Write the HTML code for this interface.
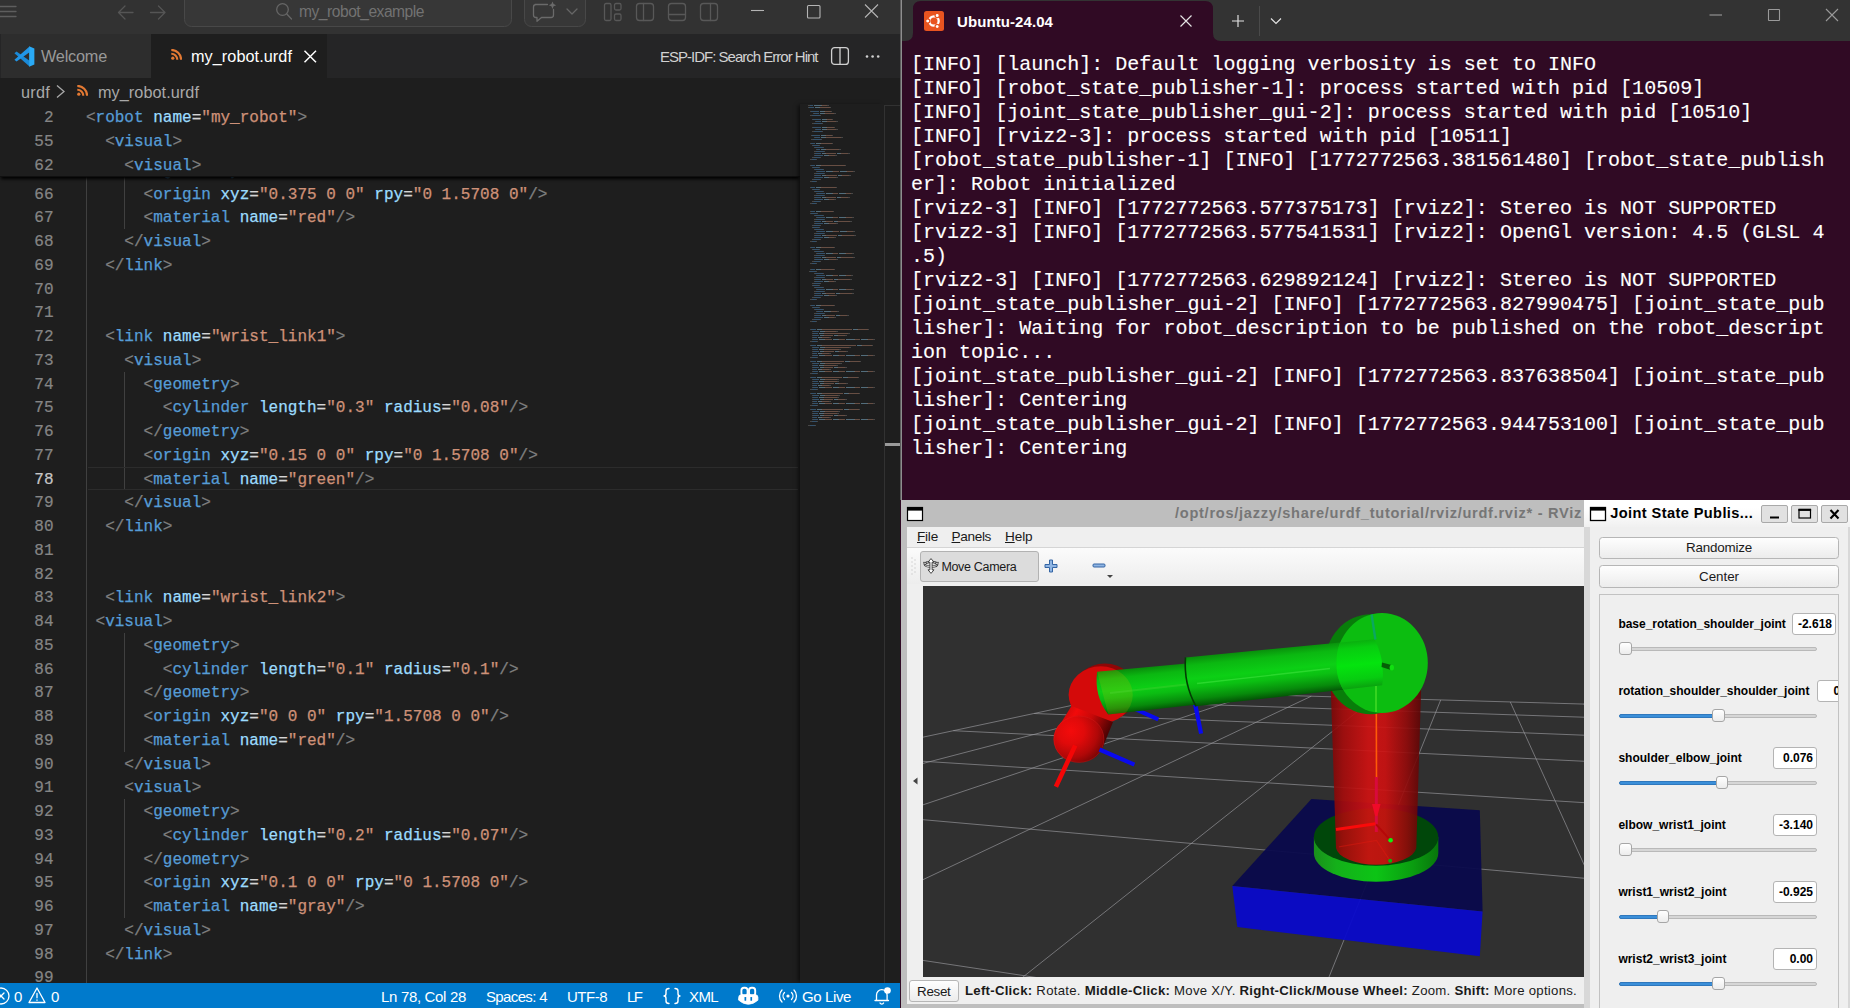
<!DOCTYPE html><html><head><meta charset="utf-8"><title>screen</title><style>html,body{margin:0;padding:0;background:#300a24;}
body{width:1850px;height:1008px;overflow:hidden;position:relative;font-family:'Liberation Sans', sans-serif;}
div,svg{position:absolute;}
.t{position:absolute;white-space:pre;}

.ln{position:absolute;left:0;width:53.5px;text-align:right;font:16.03px/23.75px 'Liberation Mono', monospace;white-space:pre;height:23.75px;-webkit-text-stroke:0.2px}
.cl{position:absolute;left:85.9px;font:16.03px/23.75px 'Liberation Mono', monospace;white-space:pre;height:23.75px;color:#d4d4d4;-webkit-text-stroke:0.25px}

.tl{position:absolute;left:9.2px;-webkit-text-stroke:0.12px;font:20.2px/24px 'Liberation Mono', monospace;color:#ffffff;white-space:pre;height:24px;transform-origin:0 50%;transform:scaleX(0.99208);}
</style></head><body><div id="vsc" style="position:absolute;left:0;top:0;width:900px;height:1008px;overflow:hidden;background:#1e1e1e;">
<div style="position:absolute;left:0;top:104px;width:800px;height:879px;overflow:hidden;">
<div style="position:absolute;left:86px;top:70px;width:1px;height:820px;background:#404040"></div>
<div style="position:absolute;left:124px;top:53.85px;width:1px;height:71.25px;background:#404040"></div>
<div style="position:absolute;left:124px;top:267.60px;width:1px;height:118.75px;background:#404040"></div>
<div style="position:absolute;left:124px;top:528.85px;width:1px;height:118.75px;background:#404040"></div>
<div style="position:absolute;left:124px;top:695.10px;width:1px;height:118.75px;background:#404040"></div>
<div style="position:absolute;left:88px;top:362.90px;width:710px;height:21.15px;border-top:1.5px solid #2c2c2c;border-bottom:1.5px solid #2c2c2c;"></div>
<div class="ln" style="top:55.95px;color:#858585">65</div>
<div class="cl" style="top:55.95px">      <span style="color:#808080">&lt;/</span><span style="color:#569cd6">geometry</span><span style="color:#808080">&gt;</span></div>
<div class="ln" style="top:79.70px;color:#858585">66</div>
<div class="cl" style="top:79.70px">      <span style="color:#808080">&lt;</span><span style="color:#569cd6">origin</span> <span style="color:#9cdcfe">xyz</span><span style="color:#d4d4d4">=</span><span style="color:#ce9178">&quot;0.375 0 0&quot;</span> <span style="color:#9cdcfe">rpy</span><span style="color:#d4d4d4">=</span><span style="color:#ce9178">&quot;0 1.5708 0&quot;</span><span style="color:#808080">/&gt;</span></div>
<div class="ln" style="top:103.45px;color:#858585">67</div>
<div class="cl" style="top:103.45px">      <span style="color:#808080">&lt;</span><span style="color:#569cd6">material</span> <span style="color:#9cdcfe">name</span><span style="color:#d4d4d4">=</span><span style="color:#ce9178">&quot;red&quot;</span><span style="color:#808080">/&gt;</span></div>
<div class="ln" style="top:127.20px;color:#858585">68</div>
<div class="cl" style="top:127.20px">    <span style="color:#808080">&lt;/</span><span style="color:#569cd6">visual</span><span style="color:#808080">&gt;</span></div>
<div class="ln" style="top:150.95px;color:#858585">69</div>
<div class="cl" style="top:150.95px">  <span style="color:#808080">&lt;/</span><span style="color:#569cd6">link</span><span style="color:#808080">&gt;</span></div>
<div class="ln" style="top:174.70px;color:#858585">70</div>
<div class="cl" style="top:174.70px"></div>
<div class="ln" style="top:198.45px;color:#858585">71</div>
<div class="cl" style="top:198.45px"></div>
<div class="ln" style="top:222.20px;color:#858585">72</div>
<div class="cl" style="top:222.20px">  <span style="color:#808080">&lt;</span><span style="color:#569cd6">link</span> <span style="color:#9cdcfe">name</span><span style="color:#d4d4d4">=</span><span style="color:#ce9178">&quot;wrist_link1&quot;</span><span style="color:#808080">&gt;</span></div>
<div class="ln" style="top:245.95px;color:#858585">73</div>
<div class="cl" style="top:245.95px">    <span style="color:#808080">&lt;</span><span style="color:#569cd6">visual</span><span style="color:#808080">&gt;</span></div>
<div class="ln" style="top:269.70px;color:#858585">74</div>
<div class="cl" style="top:269.70px">      <span style="color:#808080">&lt;</span><span style="color:#569cd6">geometry</span><span style="color:#808080">&gt;</span></div>
<div class="ln" style="top:293.45px;color:#858585">75</div>
<div class="cl" style="top:293.45px">        <span style="color:#808080">&lt;</span><span style="color:#569cd6">cylinder</span> <span style="color:#9cdcfe">length</span><span style="color:#d4d4d4">=</span><span style="color:#ce9178">&quot;0.3&quot;</span> <span style="color:#9cdcfe">radius</span><span style="color:#d4d4d4">=</span><span style="color:#ce9178">&quot;0.08&quot;</span><span style="color:#808080">/&gt;</span></div>
<div class="ln" style="top:317.20px;color:#858585">76</div>
<div class="cl" style="top:317.20px">      <span style="color:#808080">&lt;/</span><span style="color:#569cd6">geometry</span><span style="color:#808080">&gt;</span></div>
<div class="ln" style="top:340.95px;color:#858585">77</div>
<div class="cl" style="top:340.95px">      <span style="color:#808080">&lt;</span><span style="color:#569cd6">origin</span> <span style="color:#9cdcfe">xyz</span><span style="color:#d4d4d4">=</span><span style="color:#ce9178">&quot;0.15 0 0&quot;</span> <span style="color:#9cdcfe">rpy</span><span style="color:#d4d4d4">=</span><span style="color:#ce9178">&quot;0 1.5708 0&quot;</span><span style="color:#808080">/&gt;</span></div>
<div class="ln" style="top:364.70px;color:#c6c6c6">78</div>
<div class="cl" style="top:364.70px">      <span style="color:#808080">&lt;</span><span style="color:#569cd6">material</span> <span style="color:#9cdcfe">name</span><span style="color:#d4d4d4">=</span><span style="color:#ce9178">&quot;green&quot;</span><span style="color:#808080">/&gt;</span></div>
<div class="ln" style="top:388.45px;color:#858585">79</div>
<div class="cl" style="top:388.45px">    <span style="color:#808080">&lt;/</span><span style="color:#569cd6">visual</span><span style="color:#808080">&gt;</span></div>
<div class="ln" style="top:412.20px;color:#858585">80</div>
<div class="cl" style="top:412.20px">  <span style="color:#808080">&lt;/</span><span style="color:#569cd6">link</span><span style="color:#808080">&gt;</span></div>
<div class="ln" style="top:435.95px;color:#858585">81</div>
<div class="cl" style="top:435.95px"></div>
<div class="ln" style="top:459.70px;color:#858585">82</div>
<div class="cl" style="top:459.70px"></div>
<div class="ln" style="top:483.45px;color:#858585">83</div>
<div class="cl" style="top:483.45px">  <span style="color:#808080">&lt;</span><span style="color:#569cd6">link</span> <span style="color:#9cdcfe">name</span><span style="color:#d4d4d4">=</span><span style="color:#ce9178">&quot;wrist_link2&quot;</span><span style="color:#808080">&gt;</span></div>
<div class="ln" style="top:507.20px;color:#858585">84</div>
<div class="cl" style="top:507.20px"> <span style="color:#808080">&lt;</span><span style="color:#569cd6">visual</span><span style="color:#808080">&gt;</span></div>
<div class="ln" style="top:530.95px;color:#858585">85</div>
<div class="cl" style="top:530.95px">      <span style="color:#808080">&lt;</span><span style="color:#569cd6">geometry</span><span style="color:#808080">&gt;</span></div>
<div class="ln" style="top:554.70px;color:#858585">86</div>
<div class="cl" style="top:554.70px">        <span style="color:#808080">&lt;</span><span style="color:#569cd6">cylinder</span> <span style="color:#9cdcfe">length</span><span style="color:#d4d4d4">=</span><span style="color:#ce9178">&quot;0.1&quot;</span> <span style="color:#9cdcfe">radius</span><span style="color:#d4d4d4">=</span><span style="color:#ce9178">&quot;0.1&quot;</span><span style="color:#808080">/&gt;</span></div>
<div class="ln" style="top:578.45px;color:#858585">87</div>
<div class="cl" style="top:578.45px">      <span style="color:#808080">&lt;/</span><span style="color:#569cd6">geometry</span><span style="color:#808080">&gt;</span></div>
<div class="ln" style="top:602.20px;color:#858585">88</div>
<div class="cl" style="top:602.20px">      <span style="color:#808080">&lt;</span><span style="color:#569cd6">origin</span> <span style="color:#9cdcfe">xyz</span><span style="color:#d4d4d4">=</span><span style="color:#ce9178">&quot;0 0 0&quot;</span> <span style="color:#9cdcfe">rpy</span><span style="color:#d4d4d4">=</span><span style="color:#ce9178">&quot;1.5708 0 0&quot;</span><span style="color:#808080">/&gt;</span></div>
<div class="ln" style="top:625.95px;color:#858585">89</div>
<div class="cl" style="top:625.95px">      <span style="color:#808080">&lt;</span><span style="color:#569cd6">material</span> <span style="color:#9cdcfe">name</span><span style="color:#d4d4d4">=</span><span style="color:#ce9178">&quot;red&quot;</span><span style="color:#808080">/&gt;</span></div>
<div class="ln" style="top:649.70px;color:#858585">90</div>
<div class="cl" style="top:649.70px">    <span style="color:#808080">&lt;/</span><span style="color:#569cd6">visual</span><span style="color:#808080">&gt;</span></div>
<div class="ln" style="top:673.45px;color:#858585">91</div>
<div class="cl" style="top:673.45px">    <span style="color:#808080">&lt;</span><span style="color:#569cd6">visual</span><span style="color:#808080">&gt;</span></div>
<div class="ln" style="top:697.20px;color:#858585">92</div>
<div class="cl" style="top:697.20px">      <span style="color:#808080">&lt;</span><span style="color:#569cd6">geometry</span><span style="color:#808080">&gt;</span></div>
<div class="ln" style="top:720.95px;color:#858585">93</div>
<div class="cl" style="top:720.95px">        <span style="color:#808080">&lt;</span><span style="color:#569cd6">cylinder</span> <span style="color:#9cdcfe">length</span><span style="color:#d4d4d4">=</span><span style="color:#ce9178">&quot;0.2&quot;</span> <span style="color:#9cdcfe">radius</span><span style="color:#d4d4d4">=</span><span style="color:#ce9178">&quot;0.07&quot;</span><span style="color:#808080">/&gt;</span></div>
<div class="ln" style="top:744.70px;color:#858585">94</div>
<div class="cl" style="top:744.70px">      <span style="color:#808080">&lt;/</span><span style="color:#569cd6">geometry</span><span style="color:#808080">&gt;</span></div>
<div class="ln" style="top:768.45px;color:#858585">95</div>
<div class="cl" style="top:768.45px">      <span style="color:#808080">&lt;</span><span style="color:#569cd6">origin</span> <span style="color:#9cdcfe">xyz</span><span style="color:#d4d4d4">=</span><span style="color:#ce9178">&quot;0.1 0 0&quot;</span> <span style="color:#9cdcfe">rpy</span><span style="color:#d4d4d4">=</span><span style="color:#ce9178">&quot;0 1.5708 0&quot;</span><span style="color:#808080">/&gt;</span></div>
<div class="ln" style="top:792.20px;color:#858585">96</div>
<div class="cl" style="top:792.20px">      <span style="color:#808080">&lt;</span><span style="color:#569cd6">material</span> <span style="color:#9cdcfe">name</span><span style="color:#d4d4d4">=</span><span style="color:#ce9178">&quot;gray&quot;</span><span style="color:#808080">/&gt;</span></div>
<div class="ln" style="top:815.95px;color:#858585">97</div>
<div class="cl" style="top:815.95px">    <span style="color:#808080">&lt;/</span><span style="color:#569cd6">visual</span><span style="color:#808080">&gt;</span></div>
<div class="ln" style="top:839.70px;color:#858585">98</div>
<div class="cl" style="top:839.70px">  <span style="color:#808080">&lt;/</span><span style="color:#569cd6">link</span><span style="color:#808080">&gt;</span></div>
<div class="ln" style="top:863.45px;color:#858585">99</div>
<div class="cl" style="top:863.45px"></div>
<div style="position:absolute;left:0;top:0;width:800px;height:71.6px;background:#1e1e1e;box-shadow:0 3px 3px -1px #000;border-bottom:1px solid #101010"></div>
<div class="ln" style="top:3.40px;color:#858585">2</div>
<div class="cl" style="top:3.40px"><span style="color:#808080">&lt;</span><span style="color:#569cd6">robot</span> <span style="color:#9cdcfe">name</span><span style="color:#d4d4d4">=</span><span style="color:#ce9178">&quot;my_robot&quot;</span><span style="color:#808080">&gt;</span></div>
<div class="ln" style="top:27.15px;color:#858585">55</div>
<div class="cl" style="top:27.15px">  <span style="color:#808080">&lt;</span><span style="color:#569cd6">visual</span><span style="color:#808080">&gt;</span></div>
<div class="ln" style="top:50.90px;color:#858585">62</div>
<div class="cl" style="top:50.90px">    <span style="color:#808080">&lt;</span><span style="color:#569cd6">visual</span><span style="color:#808080">&gt;</span></div>
</div>
<div style="position:absolute;left:800px;top:104px;width:84px;height:879px;background:#1e1e1e;box-shadow:-3px 0 4px -1px rgba(0,0,0,.55)"></div>
<svg style="position:absolute;left:800px;top:104px" width="84" height="879" viewBox="0 0 84 879" shape-rendering="crispEdges"><rect x="8.0" y="1.0" width="2.0" height="1" fill="#808080" opacity="0.42"/><rect x="10.0" y="1.0" width="3.0" height="1" fill="#569cd6" opacity="0.42"/><rect x="14.0" y="1.0" width="7.0" height="1" fill="#9cdcfe" opacity="0.42"/><rect x="21.0" y="1.0" width="1.0" height="1" fill="#d4d4d4" opacity="0.42"/><rect x="22.0" y="1.0" width="5.0" height="1" fill="#ce9178" opacity="0.42"/><rect x="27.0" y="1.0" width="2.0" height="1" fill="#808080" opacity="0.42"/><rect x="8.0" y="3.0" width="1.0" height="1" fill="#808080" opacity="0.42"/><rect x="9.0" y="3.0" width="5.0" height="1" fill="#569cd6" opacity="0.42"/><rect x="15.0" y="3.0" width="4.0" height="1" fill="#9cdcfe" opacity="0.42"/><rect x="19.0" y="3.0" width="1.0" height="1" fill="#d4d4d4" opacity="0.42"/><rect x="20.0" y="3.0" width="10.0" height="1" fill="#ce9178" opacity="0.42"/><rect x="30.0" y="3.0" width="1.0" height="1" fill="#808080" opacity="0.42"/><rect x="10.0" y="7.0" width="1.0" height="1" fill="#808080" opacity="0.42"/><rect x="11.0" y="7.0" width="8.0" height="1" fill="#569cd6" opacity="0.42"/><rect x="20.0" y="7.0" width="4.0" height="1" fill="#9cdcfe" opacity="0.42"/><rect x="24.0" y="7.0" width="1.0" height="1" fill="#d4d4d4" opacity="0.42"/><rect x="25.0" y="7.0" width="6.0" height="1" fill="#ce9178" opacity="0.42"/><rect x="31.0" y="7.0" width="1.0" height="1" fill="#808080" opacity="0.42"/><rect x="13.0" y="9.0" width="1.0" height="1" fill="#808080" opacity="0.42"/><rect x="14.0" y="9.0" width="5.0" height="1" fill="#569cd6" opacity="0.42"/><rect x="20.0" y="9.0" width="4.0" height="1" fill="#9cdcfe" opacity="0.42"/><rect x="24.0" y="9.0" width="1.0" height="1" fill="#d4d4d4" opacity="0.42"/><rect x="25.0" y="9.0" width="9.0" height="1" fill="#ce9178" opacity="0.42"/><rect x="34.0" y="9.0" width="2.0" height="1" fill="#808080" opacity="0.42"/><rect x="10.0" y="11.0" width="2.0" height="1" fill="#808080" opacity="0.42"/><rect x="12.0" y="11.0" width="8.0" height="1" fill="#569cd6" opacity="0.42"/><rect x="20.0" y="11.0" width="1.0" height="1" fill="#808080" opacity="0.42"/><rect x="12.0" y="15.0" width="1.0" height="1" fill="#808080" opacity="0.42"/><rect x="13.0" y="15.0" width="8.0" height="1" fill="#569cd6" opacity="0.42"/><rect x="22.0" y="15.0" width="4.0" height="1" fill="#9cdcfe" opacity="0.42"/><rect x="26.0" y="15.0" width="1.0" height="1" fill="#d4d4d4" opacity="0.42"/><rect x="27.0" y="15.0" width="5.0" height="1" fill="#ce9178" opacity="0.42"/><rect x="32.0" y="15.0" width="1.0" height="1" fill="#808080" opacity="0.42"/><rect x="15.0" y="17.0" width="1.0" height="1" fill="#808080" opacity="0.42"/><rect x="16.0" y="17.0" width="5.0" height="1" fill="#569cd6" opacity="0.42"/><rect x="22.0" y="17.0" width="4.0" height="1" fill="#9cdcfe" opacity="0.42"/><rect x="26.0" y="17.0" width="1.0" height="1" fill="#d4d4d4" opacity="0.42"/><rect x="27.0" y="17.0" width="9.0" height="1" fill="#ce9178" opacity="0.42"/><rect x="36.0" y="17.0" width="2.0" height="1" fill="#808080" opacity="0.42"/><rect x="12.0" y="19.0" width="2.0" height="1" fill="#808080" opacity="0.42"/><rect x="14.0" y="19.0" width="8.0" height="1" fill="#569cd6" opacity="0.42"/><rect x="22.0" y="19.0" width="1.0" height="1" fill="#808080" opacity="0.42"/><rect x="12.0" y="23.0" width="1.0" height="1" fill="#808080" opacity="0.42"/><rect x="13.0" y="23.0" width="8.0" height="1" fill="#569cd6" opacity="0.42"/><rect x="22.0" y="23.0" width="4.0" height="1" fill="#9cdcfe" opacity="0.42"/><rect x="26.0" y="23.0" width="1.0" height="1" fill="#d4d4d4" opacity="0.42"/><rect x="27.0" y="23.0" width="7.0" height="1" fill="#ce9178" opacity="0.42"/><rect x="34.0" y="23.0" width="1.0" height="1" fill="#808080" opacity="0.42"/><rect x="15.0" y="25.0" width="1.0" height="1" fill="#808080" opacity="0.42"/><rect x="16.0" y="25.0" width="5.0" height="1" fill="#569cd6" opacity="0.42"/><rect x="22.0" y="25.0" width="4.0" height="1" fill="#9cdcfe" opacity="0.42"/><rect x="26.0" y="25.0" width="1.0" height="1" fill="#d4d4d4" opacity="0.42"/><rect x="27.0" y="25.0" width="9.0" height="1" fill="#ce9178" opacity="0.42"/><rect x="36.0" y="25.0" width="2.0" height="1" fill="#808080" opacity="0.42"/><rect x="12.0" y="27.0" width="2.0" height="1" fill="#808080" opacity="0.42"/><rect x="14.0" y="27.0" width="8.0" height="1" fill="#569cd6" opacity="0.42"/><rect x="22.0" y="27.0" width="1.0" height="1" fill="#808080" opacity="0.42"/><rect x="11.0" y="31.0" width="1.0" height="1" fill="#808080" opacity="0.42"/><rect x="12.0" y="31.0" width="8.0" height="1" fill="#569cd6" opacity="0.42"/><rect x="21.0" y="31.0" width="4.0" height="1" fill="#9cdcfe" opacity="0.42"/><rect x="25.0" y="31.0" width="1.0" height="1" fill="#d4d4d4" opacity="0.42"/><rect x="26.0" y="31.0" width="6.0" height="1" fill="#ce9178" opacity="0.42"/><rect x="32.0" y="31.0" width="1.0" height="1" fill="#808080" opacity="0.42"/><rect x="14.0" y="33.0" width="1.0" height="1" fill="#808080" opacity="0.42"/><rect x="15.0" y="33.0" width="5.0" height="1" fill="#569cd6" opacity="0.42"/><rect x="21.0" y="33.0" width="4.0" height="1" fill="#9cdcfe" opacity="0.42"/><rect x="25.0" y="33.0" width="1.0" height="1" fill="#d4d4d4" opacity="0.42"/><rect x="26.0" y="33.0" width="15.0" height="1" fill="#ce9178" opacity="0.42"/><rect x="41.0" y="33.0" width="2.0" height="1" fill="#808080" opacity="0.42"/><rect x="11.0" y="35.0" width="2.0" height="1" fill="#808080" opacity="0.42"/><rect x="13.0" y="35.0" width="8.0" height="1" fill="#569cd6" opacity="0.42"/><rect x="21.0" y="35.0" width="1.0" height="1" fill="#808080" opacity="0.42"/><rect x="10.0" y="39.0" width="1.0" height="1" fill="#808080" opacity="0.42"/><rect x="11.0" y="39.0" width="4.0" height="1" fill="#569cd6" opacity="0.42"/><rect x="16.0" y="39.0" width="4.0" height="1" fill="#9cdcfe" opacity="0.42"/><rect x="20.0" y="39.0" width="1.0" height="1" fill="#d4d4d4" opacity="0.42"/><rect x="21.0" y="39.0" width="11.0" height="1" fill="#ce9178" opacity="0.42"/><rect x="32.0" y="39.0" width="1.0" height="1" fill="#808080" opacity="0.42"/><rect x="12.0" y="41.0" width="1.0" height="1" fill="#808080" opacity="0.42"/><rect x="13.0" y="41.0" width="6.0" height="1" fill="#569cd6" opacity="0.42"/><rect x="19.0" y="41.0" width="1.0" height="1" fill="#808080" opacity="0.42"/><rect x="14.0" y="43.0" width="1.0" height="1" fill="#808080" opacity="0.42"/><rect x="15.0" y="43.0" width="8.0" height="1" fill="#569cd6" opacity="0.42"/><rect x="23.0" y="43.0" width="1.0" height="1" fill="#808080" opacity="0.42"/><rect x="16.0" y="45.0" width="1.0" height="1" fill="#808080" opacity="0.42"/><rect x="17.0" y="45.0" width="3.0" height="1" fill="#569cd6" opacity="0.42"/><rect x="21.0" y="45.0" width="4.0" height="1" fill="#9cdcfe" opacity="0.42"/><rect x="25.0" y="45.0" width="1.0" height="1" fill="#d4d4d4" opacity="0.42"/><rect x="26.0" y="45.0" width="13.0" height="1" fill="#ce9178" opacity="0.42"/><rect x="39.0" y="45.0" width="2.0" height="1" fill="#808080" opacity="0.42"/><rect x="14.0" y="47.0" width="2.0" height="1" fill="#808080" opacity="0.42"/><rect x="16.0" y="47.0" width="8.0" height="1" fill="#569cd6" opacity="0.42"/><rect x="24.0" y="47.0" width="1.0" height="1" fill="#808080" opacity="0.42"/><rect x="14.0" y="49.0" width="1.0" height="1" fill="#808080" opacity="0.42"/><rect x="15.0" y="49.0" width="6.0" height="1" fill="#569cd6" opacity="0.42"/><rect x="22.0" y="49.0" width="3.0" height="1" fill="#9cdcfe" opacity="0.42"/><rect x="25.0" y="49.0" width="1.0" height="1" fill="#d4d4d4" opacity="0.42"/><rect x="26.0" y="49.0" width="10.0" height="1" fill="#ce9178" opacity="0.42"/><rect x="37.0" y="49.0" width="3.0" height="1" fill="#9cdcfe" opacity="0.42"/><rect x="40.0" y="49.0" width="1.0" height="1" fill="#d4d4d4" opacity="0.42"/><rect x="41.0" y="49.0" width="7.0" height="1" fill="#ce9178" opacity="0.42"/><rect x="48.0" y="49.0" width="2.0" height="1" fill="#808080" opacity="0.42"/><rect x="14.0" y="51.0" width="1.0" height="1" fill="#808080" opacity="0.42"/><rect x="15.0" y="51.0" width="8.0" height="1" fill="#569cd6" opacity="0.42"/><rect x="24.0" y="51.0" width="4.0" height="1" fill="#9cdcfe" opacity="0.42"/><rect x="28.0" y="51.0" width="1.0" height="1" fill="#d4d4d4" opacity="0.42"/><rect x="29.0" y="51.0" width="6.0" height="1" fill="#ce9178" opacity="0.42"/><rect x="35.0" y="51.0" width="2.0" height="1" fill="#808080" opacity="0.42"/><rect x="12.0" y="53.0" width="2.0" height="1" fill="#808080" opacity="0.42"/><rect x="14.0" y="53.0" width="6.0" height="1" fill="#569cd6" opacity="0.42"/><rect x="20.0" y="53.0" width="1.0" height="1" fill="#808080" opacity="0.42"/><rect x="10.0" y="55.0" width="2.0" height="1" fill="#808080" opacity="0.42"/><rect x="12.0" y="55.0" width="4.0" height="1" fill="#569cd6" opacity="0.42"/><rect x="16.0" y="55.0" width="1.0" height="1" fill="#808080" opacity="0.42"/><rect x="10.0" y="61.0" width="1.0" height="1" fill="#808080" opacity="0.42"/><rect x="11.0" y="61.0" width="4.0" height="1" fill="#569cd6" opacity="0.42"/><rect x="16.0" y="61.0" width="4.0" height="1" fill="#9cdcfe" opacity="0.42"/><rect x="20.0" y="61.0" width="1.0" height="1" fill="#d4d4d4" opacity="0.42"/><rect x="21.0" y="61.0" width="24.0" height="1" fill="#ce9178" opacity="0.42"/><rect x="45.0" y="61.0" width="1.0" height="1" fill="#808080" opacity="0.42"/><rect x="12.0" y="63.0" width="1.0" height="1" fill="#808080" opacity="0.42"/><rect x="13.0" y="63.0" width="6.0" height="1" fill="#569cd6" opacity="0.42"/><rect x="19.0" y="63.0" width="1.0" height="1" fill="#808080" opacity="0.42"/><rect x="14.0" y="65.0" width="1.0" height="1" fill="#808080" opacity="0.42"/><rect x="15.0" y="65.0" width="8.0" height="1" fill="#569cd6" opacity="0.42"/><rect x="23.0" y="65.0" width="1.0" height="1" fill="#808080" opacity="0.42"/><rect x="16.0" y="67.0" width="1.0" height="1" fill="#808080" opacity="0.42"/><rect x="17.0" y="67.0" width="8.0" height="1" fill="#569cd6" opacity="0.42"/><rect x="26.0" y="67.0" width="6.0" height="1" fill="#9cdcfe" opacity="0.42"/><rect x="32.0" y="67.0" width="1.0" height="1" fill="#d4d4d4" opacity="0.42"/><rect x="33.0" y="67.0" width="6.0" height="1" fill="#ce9178" opacity="0.42"/><rect x="40.0" y="67.0" width="6.0" height="1" fill="#9cdcfe" opacity="0.42"/><rect x="46.0" y="67.0" width="1.0" height="1" fill="#d4d4d4" opacity="0.42"/><rect x="47.0" y="67.0" width="6.0" height="1" fill="#ce9178" opacity="0.42"/><rect x="53.0" y="67.0" width="2.0" height="1" fill="#808080" opacity="0.42"/><rect x="14.0" y="69.0" width="2.0" height="1" fill="#808080" opacity="0.42"/><rect x="16.0" y="69.0" width="8.0" height="1" fill="#569cd6" opacity="0.42"/><rect x="24.0" y="69.0" width="1.0" height="1" fill="#808080" opacity="0.42"/><rect x="14.0" y="71.0" width="1.0" height="1" fill="#808080" opacity="0.42"/><rect x="15.0" y="71.0" width="6.0" height="1" fill="#569cd6" opacity="0.42"/><rect x="22.0" y="71.0" width="3.0" height="1" fill="#9cdcfe" opacity="0.42"/><rect x="25.0" y="71.0" width="1.0" height="1" fill="#d4d4d4" opacity="0.42"/><rect x="26.0" y="71.0" width="11.0" height="1" fill="#ce9178" opacity="0.42"/><rect x="38.0" y="71.0" width="3.0" height="1" fill="#9cdcfe" opacity="0.42"/><rect x="41.0" y="71.0" width="1.0" height="1" fill="#d4d4d4" opacity="0.42"/><rect x="42.0" y="71.0" width="7.0" height="1" fill="#ce9178" opacity="0.42"/><rect x="49.0" y="71.0" width="2.0" height="1" fill="#808080" opacity="0.42"/><rect x="14.0" y="73.0" width="1.0" height="1" fill="#808080" opacity="0.42"/><rect x="15.0" y="73.0" width="8.0" height="1" fill="#569cd6" opacity="0.42"/><rect x="24.0" y="73.0" width="4.0" height="1" fill="#9cdcfe" opacity="0.42"/><rect x="28.0" y="73.0" width="1.0" height="1" fill="#d4d4d4" opacity="0.42"/><rect x="29.0" y="73.0" width="7.0" height="1" fill="#ce9178" opacity="0.42"/><rect x="36.0" y="73.0" width="2.0" height="1" fill="#808080" opacity="0.42"/><rect x="12.0" y="75.0" width="2.0" height="1" fill="#808080" opacity="0.42"/><rect x="14.0" y="75.0" width="6.0" height="1" fill="#569cd6" opacity="0.42"/><rect x="20.0" y="75.0" width="1.0" height="1" fill="#808080" opacity="0.42"/><rect x="10.0" y="77.0" width="2.0" height="1" fill="#808080" opacity="0.42"/><rect x="12.0" y="77.0" width="4.0" height="1" fill="#569cd6" opacity="0.42"/><rect x="16.0" y="77.0" width="1.0" height="1" fill="#808080" opacity="0.42"/><rect x="10.0" y="83.0" width="1.0" height="1" fill="#808080" opacity="0.42"/><rect x="11.0" y="83.0" width="4.0" height="1" fill="#569cd6" opacity="0.42"/><rect x="16.0" y="83.0" width="4.0" height="1" fill="#9cdcfe" opacity="0.42"/><rect x="20.0" y="83.0" width="1.0" height="1" fill="#d4d4d4" opacity="0.42"/><rect x="21.0" y="83.0" width="15.0" height="1" fill="#ce9178" opacity="0.42"/><rect x="36.0" y="83.0" width="1.0" height="1" fill="#808080" opacity="0.42"/><rect x="12.0" y="85.0" width="1.0" height="1" fill="#808080" opacity="0.42"/><rect x="13.0" y="85.0" width="6.0" height="1" fill="#569cd6" opacity="0.42"/><rect x="19.0" y="85.0" width="1.0" height="1" fill="#808080" opacity="0.42"/><rect x="14.0" y="87.0" width="1.0" height="1" fill="#808080" opacity="0.42"/><rect x="15.0" y="87.0" width="8.0" height="1" fill="#569cd6" opacity="0.42"/><rect x="23.0" y="87.0" width="1.0" height="1" fill="#808080" opacity="0.42"/><rect x="16.0" y="89.0" width="1.0" height="1" fill="#808080" opacity="0.42"/><rect x="17.0" y="89.0" width="8.0" height="1" fill="#569cd6" opacity="0.42"/><rect x="26.0" y="89.0" width="6.0" height="1" fill="#9cdcfe" opacity="0.42"/><rect x="32.0" y="89.0" width="1.0" height="1" fill="#d4d4d4" opacity="0.42"/><rect x="33.0" y="89.0" width="5.0" height="1" fill="#ce9178" opacity="0.42"/><rect x="39.0" y="89.0" width="6.0" height="1" fill="#9cdcfe" opacity="0.42"/><rect x="45.0" y="89.0" width="1.0" height="1" fill="#d4d4d4" opacity="0.42"/><rect x="46.0" y="89.0" width="5.0" height="1" fill="#ce9178" opacity="0.42"/><rect x="51.0" y="89.0" width="2.0" height="1" fill="#808080" opacity="0.42"/><rect x="14.0" y="91.0" width="2.0" height="1" fill="#808080" opacity="0.42"/><rect x="16.0" y="91.0" width="8.0" height="1" fill="#569cd6" opacity="0.42"/><rect x="24.0" y="91.0" width="1.0" height="1" fill="#808080" opacity="0.42"/><rect x="14.0" y="93.0" width="1.0" height="1" fill="#808080" opacity="0.42"/><rect x="15.0" y="93.0" width="6.0" height="1" fill="#569cd6" opacity="0.42"/><rect x="22.0" y="93.0" width="3.0" height="1" fill="#9cdcfe" opacity="0.42"/><rect x="25.0" y="93.0" width="1.0" height="1" fill="#d4d4d4" opacity="0.42"/><rect x="26.0" y="93.0" width="10.0" height="1" fill="#ce9178" opacity="0.42"/><rect x="37.0" y="93.0" width="3.0" height="1" fill="#9cdcfe" opacity="0.42"/><rect x="40.0" y="93.0" width="1.0" height="1" fill="#d4d4d4" opacity="0.42"/><rect x="41.0" y="93.0" width="7.0" height="1" fill="#ce9178" opacity="0.42"/><rect x="48.0" y="93.0" width="2.0" height="1" fill="#808080" opacity="0.42"/><rect x="14.0" y="95.0" width="1.0" height="1" fill="#808080" opacity="0.42"/><rect x="15.0" y="95.0" width="8.0" height="1" fill="#569cd6" opacity="0.42"/><rect x="24.0" y="95.0" width="4.0" height="1" fill="#9cdcfe" opacity="0.42"/><rect x="28.0" y="95.0" width="1.0" height="1" fill="#d4d4d4" opacity="0.42"/><rect x="29.0" y="95.0" width="5.0" height="1" fill="#ce9178" opacity="0.42"/><rect x="34.0" y="95.0" width="2.0" height="1" fill="#808080" opacity="0.42"/><rect x="12.0" y="97.0" width="2.0" height="1" fill="#808080" opacity="0.42"/><rect x="14.0" y="97.0" width="6.0" height="1" fill="#569cd6" opacity="0.42"/><rect x="20.0" y="97.0" width="1.0" height="1" fill="#808080" opacity="0.42"/><rect x="10.0" y="99.0" width="2.0" height="1" fill="#808080" opacity="0.42"/><rect x="12.0" y="99.0" width="4.0" height="1" fill="#569cd6" opacity="0.42"/><rect x="16.0" y="99.0" width="1.0" height="1" fill="#808080" opacity="0.42"/><rect x="10.0" y="107.0" width="1.0" height="1" fill="#808080" opacity="0.42"/><rect x="11.0" y="107.0" width="4.0" height="1" fill="#569cd6" opacity="0.42"/><rect x="16.0" y="107.0" width="4.0" height="1" fill="#9cdcfe" opacity="0.42"/><rect x="20.0" y="107.0" width="1.0" height="1" fill="#d4d4d4" opacity="0.42"/><rect x="21.0" y="107.0" width="12.0" height="1" fill="#ce9178" opacity="0.42"/><rect x="33.0" y="107.0" width="1.0" height="1" fill="#808080" opacity="0.42"/><rect x="10.0" y="109.0" width="1.0" height="1" fill="#808080" opacity="0.42"/><rect x="11.0" y="109.0" width="6.0" height="1" fill="#569cd6" opacity="0.42"/><rect x="17.0" y="109.0" width="1.0" height="1" fill="#808080" opacity="0.42"/><rect x="14.0" y="111.0" width="1.0" height="1" fill="#808080" opacity="0.42"/><rect x="15.0" y="111.0" width="8.0" height="1" fill="#569cd6" opacity="0.42"/><rect x="23.0" y="111.0" width="1.0" height="1" fill="#808080" opacity="0.42"/><rect x="16.0" y="113.0" width="1.0" height="1" fill="#808080" opacity="0.42"/><rect x="17.0" y="113.0" width="8.0" height="1" fill="#569cd6" opacity="0.42"/><rect x="26.0" y="113.0" width="6.0" height="1" fill="#9cdcfe" opacity="0.42"/><rect x="32.0" y="113.0" width="1.0" height="1" fill="#d4d4d4" opacity="0.42"/><rect x="33.0" y="113.0" width="5.0" height="1" fill="#ce9178" opacity="0.42"/><rect x="39.0" y="113.0" width="6.0" height="1" fill="#9cdcfe" opacity="0.42"/><rect x="45.0" y="113.0" width="1.0" height="1" fill="#d4d4d4" opacity="0.42"/><rect x="46.0" y="113.0" width="6.0" height="1" fill="#ce9178" opacity="0.42"/><rect x="52.0" y="113.0" width="2.0" height="1" fill="#808080" opacity="0.42"/><rect x="14.0" y="115.0" width="2.0" height="1" fill="#808080" opacity="0.42"/><rect x="16.0" y="115.0" width="8.0" height="1" fill="#569cd6" opacity="0.42"/><rect x="24.0" y="115.0" width="1.0" height="1" fill="#808080" opacity="0.42"/><rect x="14.0" y="117.0" width="1.0" height="1" fill="#808080" opacity="0.42"/><rect x="15.0" y="117.0" width="6.0" height="1" fill="#569cd6" opacity="0.42"/><rect x="22.0" y="117.0" width="3.0" height="1" fill="#9cdcfe" opacity="0.42"/><rect x="25.0" y="117.0" width="1.0" height="1" fill="#d4d4d4" opacity="0.42"/><rect x="26.0" y="117.0" width="7.0" height="1" fill="#ce9178" opacity="0.42"/><rect x="34.0" y="117.0" width="3.0" height="1" fill="#9cdcfe" opacity="0.42"/><rect x="37.0" y="117.0" width="1.0" height="1" fill="#d4d4d4" opacity="0.42"/><rect x="38.0" y="117.0" width="12.0" height="1" fill="#ce9178" opacity="0.42"/><rect x="50.0" y="117.0" width="2.0" height="1" fill="#808080" opacity="0.42"/><rect x="14.0" y="119.0" width="1.0" height="1" fill="#808080" opacity="0.42"/><rect x="15.0" y="119.0" width="8.0" height="1" fill="#569cd6" opacity="0.42"/><rect x="24.0" y="119.0" width="4.0" height="1" fill="#9cdcfe" opacity="0.42"/><rect x="28.0" y="119.0" width="1.0" height="1" fill="#d4d4d4" opacity="0.42"/><rect x="29.0" y="119.0" width="7.0" height="1" fill="#ce9178" opacity="0.42"/><rect x="36.0" y="119.0" width="2.0" height="1" fill="#808080" opacity="0.42"/><rect x="12.0" y="121.0" width="2.0" height="1" fill="#808080" opacity="0.42"/><rect x="14.0" y="121.0" width="6.0" height="1" fill="#569cd6" opacity="0.42"/><rect x="20.0" y="121.0" width="1.0" height="1" fill="#808080" opacity="0.42"/><rect x="12.0" y="123.0" width="1.0" height="1" fill="#808080" opacity="0.42"/><rect x="13.0" y="123.0" width="6.0" height="1" fill="#569cd6" opacity="0.42"/><rect x="19.0" y="123.0" width="1.0" height="1" fill="#808080" opacity="0.42"/><rect x="14.0" y="125.0" width="1.0" height="1" fill="#808080" opacity="0.42"/><rect x="15.0" y="125.0" width="8.0" height="1" fill="#569cd6" opacity="0.42"/><rect x="23.0" y="125.0" width="1.0" height="1" fill="#808080" opacity="0.42"/><rect x="16.0" y="127.0" width="1.0" height="1" fill="#808080" opacity="0.42"/><rect x="17.0" y="127.0" width="8.0" height="1" fill="#569cd6" opacity="0.42"/><rect x="26.0" y="127.0" width="6.0" height="1" fill="#9cdcfe" opacity="0.42"/><rect x="32.0" y="127.0" width="1.0" height="1" fill="#d4d4d4" opacity="0.42"/><rect x="33.0" y="127.0" width="6.0" height="1" fill="#ce9178" opacity="0.42"/><rect x="40.0" y="127.0" width="6.0" height="1" fill="#9cdcfe" opacity="0.42"/><rect x="46.0" y="127.0" width="1.0" height="1" fill="#d4d4d4" opacity="0.42"/><rect x="47.0" y="127.0" width="6.0" height="1" fill="#ce9178" opacity="0.42"/><rect x="53.0" y="127.0" width="2.0" height="1" fill="#808080" opacity="0.42"/><rect x="14.0" y="129.0" width="2.0" height="1" fill="#808080" opacity="0.42"/><rect x="16.0" y="129.0" width="8.0" height="1" fill="#569cd6" opacity="0.42"/><rect x="24.0" y="129.0" width="1.0" height="1" fill="#808080" opacity="0.42"/><rect x="14.0" y="131.0" width="1.0" height="1" fill="#808080" opacity="0.42"/><rect x="15.0" y="131.0" width="6.0" height="1" fill="#569cd6" opacity="0.42"/><rect x="22.0" y="131.0" width="3.0" height="1" fill="#9cdcfe" opacity="0.42"/><rect x="25.0" y="131.0" width="1.0" height="1" fill="#d4d4d4" opacity="0.42"/><rect x="26.0" y="131.0" width="11.0" height="1" fill="#ce9178" opacity="0.42"/><rect x="38.0" y="131.0" width="3.0" height="1" fill="#9cdcfe" opacity="0.42"/><rect x="41.0" y="131.0" width="1.0" height="1" fill="#d4d4d4" opacity="0.42"/><rect x="42.0" y="131.0" width="12.0" height="1" fill="#ce9178" opacity="0.42"/><rect x="54.0" y="131.0" width="2.0" height="1" fill="#808080" opacity="0.42"/><rect x="14.0" y="133.0" width="1.0" height="1" fill="#808080" opacity="0.42"/><rect x="15.0" y="133.0" width="8.0" height="1" fill="#569cd6" opacity="0.42"/><rect x="24.0" y="133.0" width="4.0" height="1" fill="#9cdcfe" opacity="0.42"/><rect x="28.0" y="133.0" width="1.0" height="1" fill="#d4d4d4" opacity="0.42"/><rect x="29.0" y="133.0" width="5.0" height="1" fill="#ce9178" opacity="0.42"/><rect x="34.0" y="133.0" width="2.0" height="1" fill="#808080" opacity="0.42"/><rect x="12.0" y="135.0" width="2.0" height="1" fill="#808080" opacity="0.42"/><rect x="14.0" y="135.0" width="6.0" height="1" fill="#569cd6" opacity="0.42"/><rect x="20.0" y="135.0" width="1.0" height="1" fill="#808080" opacity="0.42"/><rect x="10.0" y="137.0" width="2.0" height="1" fill="#808080" opacity="0.42"/><rect x="12.0" y="137.0" width="4.0" height="1" fill="#569cd6" opacity="0.42"/><rect x="16.0" y="137.0" width="1.0" height="1" fill="#808080" opacity="0.42"/><rect x="10.0" y="143.0" width="1.0" height="1" fill="#808080" opacity="0.42"/><rect x="11.0" y="143.0" width="4.0" height="1" fill="#569cd6" opacity="0.42"/><rect x="16.0" y="143.0" width="4.0" height="1" fill="#9cdcfe" opacity="0.42"/><rect x="20.0" y="143.0" width="1.0" height="1" fill="#d4d4d4" opacity="0.42"/><rect x="21.0" y="143.0" width="13.0" height="1" fill="#ce9178" opacity="0.42"/><rect x="34.0" y="143.0" width="1.0" height="1" fill="#808080" opacity="0.42"/><rect x="12.0" y="145.0" width="1.0" height="1" fill="#808080" opacity="0.42"/><rect x="13.0" y="145.0" width="6.0" height="1" fill="#569cd6" opacity="0.42"/><rect x="19.0" y="145.0" width="1.0" height="1" fill="#808080" opacity="0.42"/><rect x="14.0" y="147.0" width="1.0" height="1" fill="#808080" opacity="0.42"/><rect x="15.0" y="147.0" width="8.0" height="1" fill="#569cd6" opacity="0.42"/><rect x="23.0" y="147.0" width="1.0" height="1" fill="#808080" opacity="0.42"/><rect x="16.0" y="149.0" width="1.0" height="1" fill="#808080" opacity="0.42"/><rect x="17.0" y="149.0" width="8.0" height="1" fill="#569cd6" opacity="0.42"/><rect x="26.0" y="149.0" width="6.0" height="1" fill="#9cdcfe" opacity="0.42"/><rect x="32.0" y="149.0" width="1.0" height="1" fill="#d4d4d4" opacity="0.42"/><rect x="33.0" y="149.0" width="5.0" height="1" fill="#ce9178" opacity="0.42"/><rect x="39.0" y="149.0" width="6.0" height="1" fill="#9cdcfe" opacity="0.42"/><rect x="45.0" y="149.0" width="1.0" height="1" fill="#d4d4d4" opacity="0.42"/><rect x="46.0" y="149.0" width="6.0" height="1" fill="#ce9178" opacity="0.42"/><rect x="52.0" y="149.0" width="2.0" height="1" fill="#808080" opacity="0.42"/><rect x="14.0" y="151.0" width="2.0" height="1" fill="#808080" opacity="0.42"/><rect x="16.0" y="151.0" width="8.0" height="1" fill="#569cd6" opacity="0.42"/><rect x="24.0" y="151.0" width="1.0" height="1" fill="#808080" opacity="0.42"/><rect x="14.0" y="153.0" width="1.0" height="1" fill="#808080" opacity="0.42"/><rect x="15.0" y="153.0" width="6.0" height="1" fill="#569cd6" opacity="0.42"/><rect x="22.0" y="153.0" width="3.0" height="1" fill="#9cdcfe" opacity="0.42"/><rect x="25.0" y="153.0" width="1.0" height="1" fill="#d4d4d4" opacity="0.42"/><rect x="26.0" y="153.0" width="10.0" height="1" fill="#ce9178" opacity="0.42"/><rect x="37.0" y="153.0" width="3.0" height="1" fill="#9cdcfe" opacity="0.42"/><rect x="40.0" y="153.0" width="1.0" height="1" fill="#d4d4d4" opacity="0.42"/><rect x="41.0" y="153.0" width="12.0" height="1" fill="#ce9178" opacity="0.42"/><rect x="53.0" y="153.0" width="2.0" height="1" fill="#808080" opacity="0.42"/><rect x="14.0" y="155.0" width="1.0" height="1" fill="#808080" opacity="0.42"/><rect x="15.0" y="155.0" width="8.0" height="1" fill="#569cd6" opacity="0.42"/><rect x="24.0" y="155.0" width="4.0" height="1" fill="#9cdcfe" opacity="0.42"/><rect x="28.0" y="155.0" width="1.0" height="1" fill="#d4d4d4" opacity="0.42"/><rect x="29.0" y="155.0" width="7.0" height="1" fill="#ce9178" opacity="0.42"/><rect x="36.0" y="155.0" width="2.0" height="1" fill="#808080" opacity="0.42"/><rect x="12.0" y="157.0" width="2.0" height="1" fill="#808080" opacity="0.42"/><rect x="14.0" y="157.0" width="6.0" height="1" fill="#569cd6" opacity="0.42"/><rect x="20.0" y="157.0" width="1.0" height="1" fill="#808080" opacity="0.42"/><rect x="10.0" y="159.0" width="2.0" height="1" fill="#808080" opacity="0.42"/><rect x="12.0" y="159.0" width="4.0" height="1" fill="#569cd6" opacity="0.42"/><rect x="16.0" y="159.0" width="1.0" height="1" fill="#808080" opacity="0.42"/><rect x="10.0" y="165.0" width="1.0" height="1" fill="#808080" opacity="0.42"/><rect x="11.0" y="165.0" width="4.0" height="1" fill="#569cd6" opacity="0.42"/><rect x="16.0" y="165.0" width="4.0" height="1" fill="#9cdcfe" opacity="0.42"/><rect x="20.0" y="165.0" width="1.0" height="1" fill="#d4d4d4" opacity="0.42"/><rect x="21.0" y="165.0" width="13.0" height="1" fill="#ce9178" opacity="0.42"/><rect x="34.0" y="165.0" width="1.0" height="1" fill="#808080" opacity="0.42"/><rect x="9.0" y="167.0" width="1.0" height="1" fill="#808080" opacity="0.42"/><rect x="10.0" y="167.0" width="6.0" height="1" fill="#569cd6" opacity="0.42"/><rect x="16.0" y="167.0" width="1.0" height="1" fill="#808080" opacity="0.42"/><rect x="14.0" y="169.0" width="1.0" height="1" fill="#808080" opacity="0.42"/><rect x="15.0" y="169.0" width="8.0" height="1" fill="#569cd6" opacity="0.42"/><rect x="23.0" y="169.0" width="1.0" height="1" fill="#808080" opacity="0.42"/><rect x="16.0" y="171.0" width="1.0" height="1" fill="#808080" opacity="0.42"/><rect x="17.0" y="171.0" width="8.0" height="1" fill="#569cd6" opacity="0.42"/><rect x="26.0" y="171.0" width="6.0" height="1" fill="#9cdcfe" opacity="0.42"/><rect x="32.0" y="171.0" width="1.0" height="1" fill="#d4d4d4" opacity="0.42"/><rect x="33.0" y="171.0" width="5.0" height="1" fill="#ce9178" opacity="0.42"/><rect x="39.0" y="171.0" width="6.0" height="1" fill="#9cdcfe" opacity="0.42"/><rect x="45.0" y="171.0" width="1.0" height="1" fill="#d4d4d4" opacity="0.42"/><rect x="46.0" y="171.0" width="5.0" height="1" fill="#ce9178" opacity="0.42"/><rect x="51.0" y="171.0" width="2.0" height="1" fill="#808080" opacity="0.42"/><rect x="14.0" y="173.0" width="2.0" height="1" fill="#808080" opacity="0.42"/><rect x="16.0" y="173.0" width="8.0" height="1" fill="#569cd6" opacity="0.42"/><rect x="24.0" y="173.0" width="1.0" height="1" fill="#808080" opacity="0.42"/><rect x="14.0" y="175.0" width="1.0" height="1" fill="#808080" opacity="0.42"/><rect x="15.0" y="175.0" width="6.0" height="1" fill="#569cd6" opacity="0.42"/><rect x="22.0" y="175.0" width="3.0" height="1" fill="#9cdcfe" opacity="0.42"/><rect x="25.0" y="175.0" width="1.0" height="1" fill="#d4d4d4" opacity="0.42"/><rect x="26.0" y="175.0" width="7.0" height="1" fill="#ce9178" opacity="0.42"/><rect x="34.0" y="175.0" width="3.0" height="1" fill="#9cdcfe" opacity="0.42"/><rect x="37.0" y="175.0" width="1.0" height="1" fill="#d4d4d4" opacity="0.42"/><rect x="38.0" y="175.0" width="12.0" height="1" fill="#ce9178" opacity="0.42"/><rect x="50.0" y="175.0" width="2.0" height="1" fill="#808080" opacity="0.42"/><rect x="14.0" y="177.0" width="1.0" height="1" fill="#808080" opacity="0.42"/><rect x="15.0" y="177.0" width="8.0" height="1" fill="#569cd6" opacity="0.42"/><rect x="24.0" y="177.0" width="4.0" height="1" fill="#9cdcfe" opacity="0.42"/><rect x="28.0" y="177.0" width="1.0" height="1" fill="#d4d4d4" opacity="0.42"/><rect x="29.0" y="177.0" width="5.0" height="1" fill="#ce9178" opacity="0.42"/><rect x="34.0" y="177.0" width="2.0" height="1" fill="#808080" opacity="0.42"/><rect x="12.0" y="179.0" width="2.0" height="1" fill="#808080" opacity="0.42"/><rect x="14.0" y="179.0" width="6.0" height="1" fill="#569cd6" opacity="0.42"/><rect x="20.0" y="179.0" width="1.0" height="1" fill="#808080" opacity="0.42"/><rect x="12.0" y="181.0" width="1.0" height="1" fill="#808080" opacity="0.42"/><rect x="13.0" y="181.0" width="6.0" height="1" fill="#569cd6" opacity="0.42"/><rect x="19.0" y="181.0" width="1.0" height="1" fill="#808080" opacity="0.42"/><rect x="14.0" y="183.0" width="1.0" height="1" fill="#808080" opacity="0.42"/><rect x="15.0" y="183.0" width="8.0" height="1" fill="#569cd6" opacity="0.42"/><rect x="23.0" y="183.0" width="1.0" height="1" fill="#808080" opacity="0.42"/><rect x="16.0" y="185.0" width="1.0" height="1" fill="#808080" opacity="0.42"/><rect x="17.0" y="185.0" width="8.0" height="1" fill="#569cd6" opacity="0.42"/><rect x="26.0" y="185.0" width="6.0" height="1" fill="#9cdcfe" opacity="0.42"/><rect x="32.0" y="185.0" width="1.0" height="1" fill="#d4d4d4" opacity="0.42"/><rect x="33.0" y="185.0" width="5.0" height="1" fill="#ce9178" opacity="0.42"/><rect x="39.0" y="185.0" width="6.0" height="1" fill="#9cdcfe" opacity="0.42"/><rect x="45.0" y="185.0" width="1.0" height="1" fill="#d4d4d4" opacity="0.42"/><rect x="46.0" y="185.0" width="6.0" height="1" fill="#ce9178" opacity="0.42"/><rect x="52.0" y="185.0" width="2.0" height="1" fill="#808080" opacity="0.42"/><rect x="14.0" y="187.0" width="2.0" height="1" fill="#808080" opacity="0.42"/><rect x="16.0" y="187.0" width="8.0" height="1" fill="#569cd6" opacity="0.42"/><rect x="24.0" y="187.0" width="1.0" height="1" fill="#808080" opacity="0.42"/><rect x="14.0" y="189.0" width="1.0" height="1" fill="#808080" opacity="0.42"/><rect x="15.0" y="189.0" width="6.0" height="1" fill="#569cd6" opacity="0.42"/><rect x="22.0" y="189.0" width="3.0" height="1" fill="#9cdcfe" opacity="0.42"/><rect x="25.0" y="189.0" width="1.0" height="1" fill="#d4d4d4" opacity="0.42"/><rect x="26.0" y="189.0" width="9.0" height="1" fill="#ce9178" opacity="0.42"/><rect x="36.0" y="189.0" width="3.0" height="1" fill="#9cdcfe" opacity="0.42"/><rect x="39.0" y="189.0" width="1.0" height="1" fill="#d4d4d4" opacity="0.42"/><rect x="40.0" y="189.0" width="12.0" height="1" fill="#ce9178" opacity="0.42"/><rect x="52.0" y="189.0" width="2.0" height="1" fill="#808080" opacity="0.42"/><rect x="14.0" y="191.0" width="1.0" height="1" fill="#808080" opacity="0.42"/><rect x="15.0" y="191.0" width="8.0" height="1" fill="#569cd6" opacity="0.42"/><rect x="24.0" y="191.0" width="4.0" height="1" fill="#9cdcfe" opacity="0.42"/><rect x="28.0" y="191.0" width="1.0" height="1" fill="#d4d4d4" opacity="0.42"/><rect x="29.0" y="191.0" width="6.0" height="1" fill="#ce9178" opacity="0.42"/><rect x="35.0" y="191.0" width="2.0" height="1" fill="#808080" opacity="0.42"/><rect x="12.0" y="193.0" width="2.0" height="1" fill="#808080" opacity="0.42"/><rect x="14.0" y="193.0" width="6.0" height="1" fill="#569cd6" opacity="0.42"/><rect x="20.0" y="193.0" width="1.0" height="1" fill="#808080" opacity="0.42"/><rect x="10.0" y="195.0" width="2.0" height="1" fill="#808080" opacity="0.42"/><rect x="12.0" y="195.0" width="4.0" height="1" fill="#569cd6" opacity="0.42"/><rect x="16.0" y="195.0" width="1.0" height="1" fill="#808080" opacity="0.42"/><rect x="10.0" y="201.0" width="1.0" height="1" fill="#808080" opacity="0.42"/><rect x="11.0" y="201.0" width="4.0" height="1" fill="#569cd6" opacity="0.42"/><rect x="16.0" y="201.0" width="4.0" height="1" fill="#9cdcfe" opacity="0.42"/><rect x="20.0" y="201.0" width="1.0" height="1" fill="#d4d4d4" opacity="0.42"/><rect x="21.0" y="201.0" width="13.0" height="1" fill="#ce9178" opacity="0.42"/><rect x="34.0" y="201.0" width="1.0" height="1" fill="#808080" opacity="0.42"/><rect x="12.0" y="203.0" width="1.0" height="1" fill="#808080" opacity="0.42"/><rect x="13.0" y="203.0" width="6.0" height="1" fill="#569cd6" opacity="0.42"/><rect x="19.0" y="203.0" width="1.0" height="1" fill="#808080" opacity="0.42"/><rect x="14.0" y="205.0" width="1.0" height="1" fill="#808080" opacity="0.42"/><rect x="15.0" y="205.0" width="8.0" height="1" fill="#569cd6" opacity="0.42"/><rect x="23.0" y="205.0" width="1.0" height="1" fill="#808080" opacity="0.42"/><rect x="16.0" y="207.0" width="1.0" height="1" fill="#808080" opacity="0.42"/><rect x="17.0" y="207.0" width="6.0" height="1" fill="#569cd6" opacity="0.42"/><rect x="24.0" y="207.0" width="6.0" height="1" fill="#9cdcfe" opacity="0.42"/><rect x="30.0" y="207.0" width="1.0" height="1" fill="#d4d4d4" opacity="0.42"/><rect x="31.0" y="207.0" width="6.0" height="1" fill="#ce9178" opacity="0.42"/><rect x="37.0" y="207.0" width="2.0" height="1" fill="#808080" opacity="0.42"/><rect x="14.0" y="209.0" width="2.0" height="1" fill="#808080" opacity="0.42"/><rect x="16.0" y="209.0" width="8.0" height="1" fill="#569cd6" opacity="0.42"/><rect x="24.0" y="209.0" width="1.0" height="1" fill="#808080" opacity="0.42"/><rect x="14.0" y="211.0" width="1.0" height="1" fill="#808080" opacity="0.42"/><rect x="15.0" y="211.0" width="6.0" height="1" fill="#569cd6" opacity="0.42"/><rect x="22.0" y="211.0" width="3.0" height="1" fill="#9cdcfe" opacity="0.42"/><rect x="25.0" y="211.0" width="1.0" height="1" fill="#d4d4d4" opacity="0.42"/><rect x="26.0" y="211.0" width="9.0" height="1" fill="#ce9178" opacity="0.42"/><rect x="36.0" y="211.0" width="3.0" height="1" fill="#9cdcfe" opacity="0.42"/><rect x="39.0" y="211.0" width="1.0" height="1" fill="#d4d4d4" opacity="0.42"/><rect x="40.0" y="211.0" width="7.0" height="1" fill="#ce9178" opacity="0.42"/><rect x="47.0" y="211.0" width="2.0" height="1" fill="#808080" opacity="0.42"/><rect x="14.0" y="213.0" width="1.0" height="1" fill="#808080" opacity="0.42"/><rect x="15.0" y="213.0" width="8.0" height="1" fill="#569cd6" opacity="0.42"/><rect x="24.0" y="213.0" width="4.0" height="1" fill="#9cdcfe" opacity="0.42"/><rect x="28.0" y="213.0" width="1.0" height="1" fill="#d4d4d4" opacity="0.42"/><rect x="29.0" y="213.0" width="5.0" height="1" fill="#ce9178" opacity="0.42"/><rect x="34.0" y="213.0" width="2.0" height="1" fill="#808080" opacity="0.42"/><rect x="12.0" y="215.0" width="2.0" height="1" fill="#808080" opacity="0.42"/><rect x="14.0" y="215.0" width="6.0" height="1" fill="#569cd6" opacity="0.42"/><rect x="20.0" y="215.0" width="1.0" height="1" fill="#808080" opacity="0.42"/><rect x="10.0" y="217.0" width="2.0" height="1" fill="#808080" opacity="0.42"/><rect x="12.0" y="217.0" width="4.0" height="1" fill="#569cd6" opacity="0.42"/><rect x="16.0" y="217.0" width="1.0" height="1" fill="#808080" opacity="0.42"/><rect x="10.0" y="225.0" width="1.0" height="1" fill="#808080" opacity="0.42"/><rect x="11.0" y="225.0" width="5.0" height="1" fill="#569cd6" opacity="0.42"/><rect x="17.0" y="225.0" width="4.0" height="1" fill="#9cdcfe" opacity="0.42"/><rect x="21.0" y="225.0" width="1.0" height="1" fill="#d4d4d4" opacity="0.42"/><rect x="22.0" y="225.0" width="30.0" height="1" fill="#ce9178" opacity="0.42"/><rect x="53.0" y="225.0" width="4.0" height="1" fill="#9cdcfe" opacity="0.42"/><rect x="57.0" y="225.0" width="1.0" height="1" fill="#d4d4d4" opacity="0.42"/><rect x="58.0" y="225.0" width="10.0" height="1" fill="#ce9178" opacity="0.42"/><rect x="68.0" y="225.0" width="1.0" height="1" fill="#808080" opacity="0.42"/><rect x="12.0" y="227.0" width="1.0" height="1" fill="#808080" opacity="0.42"/><rect x="13.0" y="227.0" width="6.0" height="1" fill="#569cd6" opacity="0.42"/><rect x="20.0" y="227.0" width="4.0" height="1" fill="#9cdcfe" opacity="0.42"/><rect x="24.0" y="227.0" width="1.0" height="1" fill="#d4d4d4" opacity="0.42"/><rect x="25.0" y="227.0" width="11.0" height="1" fill="#ce9178" opacity="0.42"/><rect x="36.0" y="227.0" width="2.0" height="1" fill="#808080" opacity="0.42"/><rect x="12.0" y="229.0" width="1.0" height="1" fill="#808080" opacity="0.42"/><rect x="13.0" y="229.0" width="5.0" height="1" fill="#569cd6" opacity="0.42"/><rect x="19.0" y="229.0" width="4.0" height="1" fill="#9cdcfe" opacity="0.42"/><rect x="23.0" y="229.0" width="1.0" height="1" fill="#d4d4d4" opacity="0.42"/><rect x="24.0" y="229.0" width="24.0" height="1" fill="#ce9178" opacity="0.42"/><rect x="48.0" y="229.0" width="2.0" height="1" fill="#808080" opacity="0.42"/><rect x="12.0" y="231.0" width="1.0" height="1" fill="#808080" opacity="0.42"/><rect x="13.0" y="231.0" width="6.0" height="1" fill="#569cd6" opacity="0.42"/><rect x="20.0" y="231.0" width="3.0" height="1" fill="#9cdcfe" opacity="0.42"/><rect x="23.0" y="231.0" width="1.0" height="1" fill="#d4d4d4" opacity="0.42"/><rect x="24.0" y="231.0" width="9.0" height="1" fill="#ce9178" opacity="0.42"/><rect x="34.0" y="231.0" width="3.0" height="1" fill="#9cdcfe" opacity="0.42"/><rect x="37.0" y="231.0" width="1.0" height="1" fill="#d4d4d4" opacity="0.42"/><rect x="38.0" y="231.0" width="7.0" height="1" fill="#ce9178" opacity="0.42"/><rect x="45.0" y="231.0" width="2.0" height="1" fill="#808080" opacity="0.42"/><rect x="12.0" y="233.0" width="1.0" height="1" fill="#808080" opacity="0.42"/><rect x="13.0" y="233.0" width="4.0" height="1" fill="#569cd6" opacity="0.42"/><rect x="18.0" y="233.0" width="3.0" height="1" fill="#9cdcfe" opacity="0.42"/><rect x="21.0" y="233.0" width="1.0" height="1" fill="#d4d4d4" opacity="0.42"/><rect x="22.0" y="233.0" width="7.0" height="1" fill="#ce9178" opacity="0.42"/><rect x="29.0" y="233.0" width="2.0" height="1" fill="#808080" opacity="0.42"/><rect x="12.0" y="235.0" width="1.0" height="1" fill="#808080" opacity="0.42"/><rect x="13.0" y="235.0" width="5.0" height="1" fill="#569cd6" opacity="0.42"/><rect x="19.0" y="235.0" width="5.0" height="1" fill="#9cdcfe" opacity="0.42"/><rect x="24.0" y="235.0" width="1.0" height="1" fill="#d4d4d4" opacity="0.42"/><rect x="25.0" y="235.0" width="7.0" height="1" fill="#ce9178" opacity="0.42"/><rect x="33.0" y="235.0" width="5.0" height="1" fill="#9cdcfe" opacity="0.42"/><rect x="38.0" y="235.0" width="1.0" height="1" fill="#d4d4d4" opacity="0.42"/><rect x="39.0" y="235.0" width="6.0" height="1" fill="#ce9178" opacity="0.42"/><rect x="46.0" y="235.0" width="8.0" height="1" fill="#9cdcfe" opacity="0.42"/><rect x="54.0" y="235.0" width="1.0" height="1" fill="#d4d4d4" opacity="0.42"/><rect x="55.0" y="235.0" width="5.0" height="1" fill="#ce9178" opacity="0.42"/><rect x="61.0" y="235.0" width="6.0" height="1" fill="#9cdcfe" opacity="0.42"/><rect x="67.0" y="235.0" width="1.0" height="1" fill="#d4d4d4" opacity="0.42"/><rect x="68.0" y="235.0" width="5.0" height="1" fill="#ce9178" opacity="0.42"/><rect x="73.0" y="235.0" width="2.0" height="1" fill="#808080" opacity="0.42"/><rect x="10.0" y="237.0" width="2.0" height="1" fill="#808080" opacity="0.42"/><rect x="12.0" y="237.0" width="5.0" height="1" fill="#569cd6" opacity="0.42"/><rect x="17.0" y="237.0" width="1.0" height="1" fill="#808080" opacity="0.42"/><rect x="10.0" y="241.0" width="1.0" height="1" fill="#808080" opacity="0.42"/><rect x="11.0" y="241.0" width="5.0" height="1" fill="#569cd6" opacity="0.42"/><rect x="17.0" y="241.0" width="4.0" height="1" fill="#9cdcfe" opacity="0.42"/><rect x="21.0" y="241.0" width="1.0" height="1" fill="#d4d4d4" opacity="0.42"/><rect x="22.0" y="241.0" width="34.0" height="1" fill="#ce9178" opacity="0.42"/><rect x="57.0" y="241.0" width="4.0" height="1" fill="#9cdcfe" opacity="0.42"/><rect x="61.0" y="241.0" width="1.0" height="1" fill="#d4d4d4" opacity="0.42"/><rect x="62.0" y="241.0" width="10.0" height="1" fill="#ce9178" opacity="0.42"/><rect x="72.0" y="241.0" width="1.0" height="1" fill="#808080" opacity="0.42"/><rect x="12.0" y="243.0" width="1.0" height="1" fill="#808080" opacity="0.42"/><rect x="13.0" y="243.0" width="6.0" height="1" fill="#569cd6" opacity="0.42"/><rect x="20.0" y="243.0" width="4.0" height="1" fill="#9cdcfe" opacity="0.42"/><rect x="24.0" y="243.0" width="1.0" height="1" fill="#d4d4d4" opacity="0.42"/><rect x="25.0" y="243.0" width="24.0" height="1" fill="#ce9178" opacity="0.42"/><rect x="49.0" y="243.0" width="2.0" height="1" fill="#808080" opacity="0.42"/><rect x="12.0" y="245.0" width="1.0" height="1" fill="#808080" opacity="0.42"/><rect x="13.0" y="245.0" width="5.0" height="1" fill="#569cd6" opacity="0.42"/><rect x="19.0" y="245.0" width="4.0" height="1" fill="#9cdcfe" opacity="0.42"/><rect x="23.0" y="245.0" width="1.0" height="1" fill="#d4d4d4" opacity="0.42"/><rect x="24.0" y="245.0" width="15.0" height="1" fill="#ce9178" opacity="0.42"/><rect x="39.0" y="245.0" width="2.0" height="1" fill="#808080" opacity="0.42"/><rect x="12.0" y="247.0" width="1.0" height="1" fill="#808080" opacity="0.42"/><rect x="13.0" y="247.0" width="6.0" height="1" fill="#569cd6" opacity="0.42"/><rect x="20.0" y="247.0" width="3.0" height="1" fill="#9cdcfe" opacity="0.42"/><rect x="23.0" y="247.0" width="1.0" height="1" fill="#d4d4d4" opacity="0.42"/><rect x="24.0" y="247.0" width="10.0" height="1" fill="#ce9178" opacity="0.42"/><rect x="35.0" y="247.0" width="3.0" height="1" fill="#9cdcfe" opacity="0.42"/><rect x="38.0" y="247.0" width="1.0" height="1" fill="#d4d4d4" opacity="0.42"/><rect x="39.0" y="247.0" width="7.0" height="1" fill="#ce9178" opacity="0.42"/><rect x="46.0" y="247.0" width="2.0" height="1" fill="#808080" opacity="0.42"/><rect x="12.0" y="249.0" width="1.0" height="1" fill="#808080" opacity="0.42"/><rect x="13.0" y="249.0" width="4.0" height="1" fill="#569cd6" opacity="0.42"/><rect x="18.0" y="249.0" width="3.0" height="1" fill="#9cdcfe" opacity="0.42"/><rect x="21.0" y="249.0" width="1.0" height="1" fill="#d4d4d4" opacity="0.42"/><rect x="22.0" y="249.0" width="7.0" height="1" fill="#ce9178" opacity="0.42"/><rect x="29.0" y="249.0" width="2.0" height="1" fill="#808080" opacity="0.42"/><rect x="12.0" y="251.0" width="1.0" height="1" fill="#808080" opacity="0.42"/><rect x="13.0" y="251.0" width="5.0" height="1" fill="#569cd6" opacity="0.42"/><rect x="19.0" y="251.0" width="5.0" height="1" fill="#9cdcfe" opacity="0.42"/><rect x="24.0" y="251.0" width="1.0" height="1" fill="#d4d4d4" opacity="0.42"/><rect x="25.0" y="251.0" width="7.0" height="1" fill="#ce9178" opacity="0.42"/><rect x="33.0" y="251.0" width="5.0" height="1" fill="#9cdcfe" opacity="0.42"/><rect x="38.0" y="251.0" width="1.0" height="1" fill="#d4d4d4" opacity="0.42"/><rect x="39.0" y="251.0" width="6.0" height="1" fill="#ce9178" opacity="0.42"/><rect x="46.0" y="251.0" width="8.0" height="1" fill="#9cdcfe" opacity="0.42"/><rect x="54.0" y="251.0" width="1.0" height="1" fill="#d4d4d4" opacity="0.42"/><rect x="55.0" y="251.0" width="5.0" height="1" fill="#ce9178" opacity="0.42"/><rect x="61.0" y="251.0" width="6.0" height="1" fill="#9cdcfe" opacity="0.42"/><rect x="67.0" y="251.0" width="1.0" height="1" fill="#d4d4d4" opacity="0.42"/><rect x="68.0" y="251.0" width="5.0" height="1" fill="#ce9178" opacity="0.42"/><rect x="73.0" y="251.0" width="2.0" height="1" fill="#808080" opacity="0.42"/><rect x="10.0" y="253.0" width="2.0" height="1" fill="#808080" opacity="0.42"/><rect x="12.0" y="253.0" width="5.0" height="1" fill="#569cd6" opacity="0.42"/><rect x="17.0" y="253.0" width="1.0" height="1" fill="#808080" opacity="0.42"/><rect x="10.0" y="257.0" width="1.0" height="1" fill="#808080" opacity="0.42"/><rect x="11.0" y="257.0" width="5.0" height="1" fill="#569cd6" opacity="0.42"/><rect x="17.0" y="257.0" width="4.0" height="1" fill="#9cdcfe" opacity="0.42"/><rect x="21.0" y="257.0" width="1.0" height="1" fill="#d4d4d4" opacity="0.42"/><rect x="22.0" y="257.0" width="22.0" height="1" fill="#ce9178" opacity="0.42"/><rect x="45.0" y="257.0" width="4.0" height="1" fill="#9cdcfe" opacity="0.42"/><rect x="49.0" y="257.0" width="1.0" height="1" fill="#d4d4d4" opacity="0.42"/><rect x="50.0" y="257.0" width="10.0" height="1" fill="#ce9178" opacity="0.42"/><rect x="60.0" y="257.0" width="1.0" height="1" fill="#808080" opacity="0.42"/><rect x="12.0" y="259.0" width="1.0" height="1" fill="#808080" opacity="0.42"/><rect x="13.0" y="259.0" width="6.0" height="1" fill="#569cd6" opacity="0.42"/><rect x="20.0" y="259.0" width="4.0" height="1" fill="#9cdcfe" opacity="0.42"/><rect x="24.0" y="259.0" width="1.0" height="1" fill="#d4d4d4" opacity="0.42"/><rect x="25.0" y="259.0" width="15.0" height="1" fill="#ce9178" opacity="0.42"/><rect x="40.0" y="259.0" width="2.0" height="1" fill="#808080" opacity="0.42"/><rect x="12.0" y="261.0" width="1.0" height="1" fill="#808080" opacity="0.42"/><rect x="13.0" y="261.0" width="5.0" height="1" fill="#569cd6" opacity="0.42"/><rect x="19.0" y="261.0" width="4.0" height="1" fill="#9cdcfe" opacity="0.42"/><rect x="23.0" y="261.0" width="1.0" height="1" fill="#d4d4d4" opacity="0.42"/><rect x="24.0" y="261.0" width="12.0" height="1" fill="#ce9178" opacity="0.42"/><rect x="36.0" y="261.0" width="2.0" height="1" fill="#808080" opacity="0.42"/><rect x="12.0" y="263.0" width="1.0" height="1" fill="#808080" opacity="0.42"/><rect x="13.0" y="263.0" width="6.0" height="1" fill="#569cd6" opacity="0.42"/><rect x="20.0" y="263.0" width="3.0" height="1" fill="#9cdcfe" opacity="0.42"/><rect x="23.0" y="263.0" width="1.0" height="1" fill="#d4d4d4" opacity="0.42"/><rect x="24.0" y="263.0" width="9.0" height="1" fill="#ce9178" opacity="0.42"/><rect x="34.0" y="263.0" width="3.0" height="1" fill="#9cdcfe" opacity="0.42"/><rect x="37.0" y="263.0" width="1.0" height="1" fill="#d4d4d4" opacity="0.42"/><rect x="38.0" y="263.0" width="7.0" height="1" fill="#ce9178" opacity="0.42"/><rect x="45.0" y="263.0" width="2.0" height="1" fill="#808080" opacity="0.42"/><rect x="12.0" y="265.0" width="1.0" height="1" fill="#808080" opacity="0.42"/><rect x="13.0" y="265.0" width="4.0" height="1" fill="#569cd6" opacity="0.42"/><rect x="18.0" y="265.0" width="3.0" height="1" fill="#9cdcfe" opacity="0.42"/><rect x="21.0" y="265.0" width="1.0" height="1" fill="#d4d4d4" opacity="0.42"/><rect x="22.0" y="265.0" width="7.0" height="1" fill="#ce9178" opacity="0.42"/><rect x="29.0" y="265.0" width="2.0" height="1" fill="#808080" opacity="0.42"/><rect x="12.0" y="267.0" width="1.0" height="1" fill="#808080" opacity="0.42"/><rect x="13.0" y="267.0" width="5.0" height="1" fill="#569cd6" opacity="0.42"/><rect x="19.0" y="267.0" width="5.0" height="1" fill="#9cdcfe" opacity="0.42"/><rect x="24.0" y="267.0" width="1.0" height="1" fill="#d4d4d4" opacity="0.42"/><rect x="25.0" y="267.0" width="7.0" height="1" fill="#ce9178" opacity="0.42"/><rect x="33.0" y="267.0" width="5.0" height="1" fill="#9cdcfe" opacity="0.42"/><rect x="38.0" y="267.0" width="1.0" height="1" fill="#d4d4d4" opacity="0.42"/><rect x="39.0" y="267.0" width="6.0" height="1" fill="#ce9178" opacity="0.42"/><rect x="46.0" y="267.0" width="8.0" height="1" fill="#9cdcfe" opacity="0.42"/><rect x="54.0" y="267.0" width="1.0" height="1" fill="#d4d4d4" opacity="0.42"/><rect x="55.0" y="267.0" width="5.0" height="1" fill="#ce9178" opacity="0.42"/><rect x="61.0" y="267.0" width="6.0" height="1" fill="#9cdcfe" opacity="0.42"/><rect x="67.0" y="267.0" width="1.0" height="1" fill="#d4d4d4" opacity="0.42"/><rect x="68.0" y="267.0" width="5.0" height="1" fill="#ce9178" opacity="0.42"/><rect x="73.0" y="267.0" width="2.0" height="1" fill="#808080" opacity="0.42"/><rect x="10.0" y="269.0" width="2.0" height="1" fill="#808080" opacity="0.42"/><rect x="12.0" y="269.0" width="5.0" height="1" fill="#569cd6" opacity="0.42"/><rect x="17.0" y="269.0" width="1.0" height="1" fill="#808080" opacity="0.42"/><rect x="10.0" y="273.0" width="1.0" height="1" fill="#808080" opacity="0.42"/><rect x="11.0" y="273.0" width="5.0" height="1" fill="#569cd6" opacity="0.42"/><rect x="17.0" y="273.0" width="4.0" height="1" fill="#9cdcfe" opacity="0.42"/><rect x="21.0" y="273.0" width="1.0" height="1" fill="#d4d4d4" opacity="0.42"/><rect x="22.0" y="273.0" width="20.0" height="1" fill="#ce9178" opacity="0.42"/><rect x="43.0" y="273.0" width="4.0" height="1" fill="#9cdcfe" opacity="0.42"/><rect x="47.0" y="273.0" width="1.0" height="1" fill="#d4d4d4" opacity="0.42"/><rect x="48.0" y="273.0" width="10.0" height="1" fill="#ce9178" opacity="0.42"/><rect x="58.0" y="273.0" width="1.0" height="1" fill="#808080" opacity="0.42"/><rect x="12.0" y="275.0" width="1.0" height="1" fill="#808080" opacity="0.42"/><rect x="13.0" y="275.0" width="6.0" height="1" fill="#569cd6" opacity="0.42"/><rect x="20.0" y="275.0" width="4.0" height="1" fill="#9cdcfe" opacity="0.42"/><rect x="24.0" y="275.0" width="1.0" height="1" fill="#d4d4d4" opacity="0.42"/><rect x="25.0" y="275.0" width="12.0" height="1" fill="#ce9178" opacity="0.42"/><rect x="37.0" y="275.0" width="2.0" height="1" fill="#808080" opacity="0.42"/><rect x="12.0" y="277.0" width="1.0" height="1" fill="#808080" opacity="0.42"/><rect x="13.0" y="277.0" width="5.0" height="1" fill="#569cd6" opacity="0.42"/><rect x="19.0" y="277.0" width="4.0" height="1" fill="#9cdcfe" opacity="0.42"/><rect x="23.0" y="277.0" width="1.0" height="1" fill="#d4d4d4" opacity="0.42"/><rect x="24.0" y="277.0" width="13.0" height="1" fill="#ce9178" opacity="0.42"/><rect x="37.0" y="277.0" width="2.0" height="1" fill="#808080" opacity="0.42"/><rect x="12.0" y="279.0" width="1.0" height="1" fill="#808080" opacity="0.42"/><rect x="13.0" y="279.0" width="6.0" height="1" fill="#569cd6" opacity="0.42"/><rect x="20.0" y="279.0" width="3.0" height="1" fill="#9cdcfe" opacity="0.42"/><rect x="23.0" y="279.0" width="1.0" height="1" fill="#d4d4d4" opacity="0.42"/><rect x="24.0" y="279.0" width="10.0" height="1" fill="#ce9178" opacity="0.42"/><rect x="35.0" y="279.0" width="3.0" height="1" fill="#9cdcfe" opacity="0.42"/><rect x="38.0" y="279.0" width="1.0" height="1" fill="#d4d4d4" opacity="0.42"/><rect x="39.0" y="279.0" width="7.0" height="1" fill="#ce9178" opacity="0.42"/><rect x="46.0" y="279.0" width="2.0" height="1" fill="#808080" opacity="0.42"/><rect x="12.0" y="281.0" width="1.0" height="1" fill="#808080" opacity="0.42"/><rect x="13.0" y="281.0" width="4.0" height="1" fill="#569cd6" opacity="0.42"/><rect x="18.0" y="281.0" width="3.0" height="1" fill="#9cdcfe" opacity="0.42"/><rect x="21.0" y="281.0" width="1.0" height="1" fill="#d4d4d4" opacity="0.42"/><rect x="22.0" y="281.0" width="7.0" height="1" fill="#ce9178" opacity="0.42"/><rect x="29.0" y="281.0" width="2.0" height="1" fill="#808080" opacity="0.42"/><rect x="12.0" y="283.0" width="1.0" height="1" fill="#808080" opacity="0.42"/><rect x="13.0" y="283.0" width="5.0" height="1" fill="#569cd6" opacity="0.42"/><rect x="19.0" y="283.0" width="5.0" height="1" fill="#9cdcfe" opacity="0.42"/><rect x="24.0" y="283.0" width="1.0" height="1" fill="#d4d4d4" opacity="0.42"/><rect x="25.0" y="283.0" width="7.0" height="1" fill="#ce9178" opacity="0.42"/><rect x="33.0" y="283.0" width="5.0" height="1" fill="#9cdcfe" opacity="0.42"/><rect x="38.0" y="283.0" width="1.0" height="1" fill="#d4d4d4" opacity="0.42"/><rect x="39.0" y="283.0" width="6.0" height="1" fill="#ce9178" opacity="0.42"/><rect x="46.0" y="283.0" width="8.0" height="1" fill="#9cdcfe" opacity="0.42"/><rect x="54.0" y="283.0" width="1.0" height="1" fill="#d4d4d4" opacity="0.42"/><rect x="55.0" y="283.0" width="5.0" height="1" fill="#ce9178" opacity="0.42"/><rect x="61.0" y="283.0" width="6.0" height="1" fill="#9cdcfe" opacity="0.42"/><rect x="67.0" y="283.0" width="1.0" height="1" fill="#d4d4d4" opacity="0.42"/><rect x="68.0" y="283.0" width="5.0" height="1" fill="#ce9178" opacity="0.42"/><rect x="73.0" y="283.0" width="2.0" height="1" fill="#808080" opacity="0.42"/><rect x="10.0" y="285.0" width="2.0" height="1" fill="#808080" opacity="0.42"/><rect x="12.0" y="285.0" width="5.0" height="1" fill="#569cd6" opacity="0.42"/><rect x="17.0" y="285.0" width="1.0" height="1" fill="#808080" opacity="0.42"/><rect x="10.0" y="289.0" width="1.0" height="1" fill="#808080" opacity="0.42"/><rect x="11.0" y="289.0" width="5.0" height="1" fill="#569cd6" opacity="0.42"/><rect x="17.0" y="289.0" width="4.0" height="1" fill="#9cdcfe" opacity="0.42"/><rect x="21.0" y="289.0" width="1.0" height="1" fill="#d4d4d4" opacity="0.42"/><rect x="22.0" y="289.0" width="21.0" height="1" fill="#ce9178" opacity="0.42"/><rect x="44.0" y="289.0" width="4.0" height="1" fill="#9cdcfe" opacity="0.42"/><rect x="48.0" y="289.0" width="1.0" height="1" fill="#d4d4d4" opacity="0.42"/><rect x="49.0" y="289.0" width="10.0" height="1" fill="#ce9178" opacity="0.42"/><rect x="59.0" y="289.0" width="1.0" height="1" fill="#808080" opacity="0.42"/><rect x="12.0" y="291.0" width="1.0" height="1" fill="#808080" opacity="0.42"/><rect x="13.0" y="291.0" width="6.0" height="1" fill="#569cd6" opacity="0.42"/><rect x="20.0" y="291.0" width="4.0" height="1" fill="#9cdcfe" opacity="0.42"/><rect x="24.0" y="291.0" width="1.0" height="1" fill="#d4d4d4" opacity="0.42"/><rect x="25.0" y="291.0" width="13.0" height="1" fill="#ce9178" opacity="0.42"/><rect x="38.0" y="291.0" width="2.0" height="1" fill="#808080" opacity="0.42"/><rect x="12.0" y="293.0" width="1.0" height="1" fill="#808080" opacity="0.42"/><rect x="13.0" y="293.0" width="5.0" height="1" fill="#569cd6" opacity="0.42"/><rect x="19.0" y="293.0" width="4.0" height="1" fill="#9cdcfe" opacity="0.42"/><rect x="23.0" y="293.0" width="1.0" height="1" fill="#d4d4d4" opacity="0.42"/><rect x="24.0" y="293.0" width="13.0" height="1" fill="#ce9178" opacity="0.42"/><rect x="37.0" y="293.0" width="2.0" height="1" fill="#808080" opacity="0.42"/><rect x="12.0" y="295.0" width="1.0" height="1" fill="#808080" opacity="0.42"/><rect x="13.0" y="295.0" width="6.0" height="1" fill="#569cd6" opacity="0.42"/><rect x="20.0" y="295.0" width="3.0" height="1" fill="#9cdcfe" opacity="0.42"/><rect x="23.0" y="295.0" width="1.0" height="1" fill="#d4d4d4" opacity="0.42"/><rect x="24.0" y="295.0" width="9.0" height="1" fill="#ce9178" opacity="0.42"/><rect x="34.0" y="295.0" width="3.0" height="1" fill="#9cdcfe" opacity="0.42"/><rect x="37.0" y="295.0" width="1.0" height="1" fill="#d4d4d4" opacity="0.42"/><rect x="38.0" y="295.0" width="7.0" height="1" fill="#ce9178" opacity="0.42"/><rect x="45.0" y="295.0" width="2.0" height="1" fill="#808080" opacity="0.42"/><rect x="12.0" y="297.0" width="1.0" height="1" fill="#808080" opacity="0.42"/><rect x="13.0" y="297.0" width="4.0" height="1" fill="#569cd6" opacity="0.42"/><rect x="18.0" y="297.0" width="3.0" height="1" fill="#9cdcfe" opacity="0.42"/><rect x="21.0" y="297.0" width="1.0" height="1" fill="#d4d4d4" opacity="0.42"/><rect x="22.0" y="297.0" width="7.0" height="1" fill="#ce9178" opacity="0.42"/><rect x="29.0" y="297.0" width="2.0" height="1" fill="#808080" opacity="0.42"/><rect x="12.0" y="299.0" width="1.0" height="1" fill="#808080" opacity="0.42"/><rect x="13.0" y="299.0" width="5.0" height="1" fill="#569cd6" opacity="0.42"/><rect x="19.0" y="299.0" width="5.0" height="1" fill="#9cdcfe" opacity="0.42"/><rect x="24.0" y="299.0" width="1.0" height="1" fill="#d4d4d4" opacity="0.42"/><rect x="25.0" y="299.0" width="7.0" height="1" fill="#ce9178" opacity="0.42"/><rect x="33.0" y="299.0" width="5.0" height="1" fill="#9cdcfe" opacity="0.42"/><rect x="38.0" y="299.0" width="1.0" height="1" fill="#d4d4d4" opacity="0.42"/><rect x="39.0" y="299.0" width="6.0" height="1" fill="#ce9178" opacity="0.42"/><rect x="46.0" y="299.0" width="8.0" height="1" fill="#9cdcfe" opacity="0.42"/><rect x="54.0" y="299.0" width="1.0" height="1" fill="#d4d4d4" opacity="0.42"/><rect x="55.0" y="299.0" width="5.0" height="1" fill="#ce9178" opacity="0.42"/><rect x="61.0" y="299.0" width="6.0" height="1" fill="#9cdcfe" opacity="0.42"/><rect x="67.0" y="299.0" width="1.0" height="1" fill="#d4d4d4" opacity="0.42"/><rect x="68.0" y="299.0" width="5.0" height="1" fill="#ce9178" opacity="0.42"/><rect x="73.0" y="299.0" width="2.0" height="1" fill="#808080" opacity="0.42"/><rect x="10.0" y="301.0" width="2.0" height="1" fill="#808080" opacity="0.42"/><rect x="12.0" y="301.0" width="5.0" height="1" fill="#569cd6" opacity="0.42"/><rect x="17.0" y="301.0" width="1.0" height="1" fill="#808080" opacity="0.42"/><rect x="10.0" y="305.0" width="1.0" height="1" fill="#808080" opacity="0.42"/><rect x="11.0" y="305.0" width="5.0" height="1" fill="#569cd6" opacity="0.42"/><rect x="17.0" y="305.0" width="4.0" height="1" fill="#9cdcfe" opacity="0.42"/><rect x="21.0" y="305.0" width="1.0" height="1" fill="#d4d4d4" opacity="0.42"/><rect x="22.0" y="305.0" width="21.0" height="1" fill="#ce9178" opacity="0.42"/><rect x="44.0" y="305.0" width="4.0" height="1" fill="#9cdcfe" opacity="0.42"/><rect x="48.0" y="305.0" width="1.0" height="1" fill="#d4d4d4" opacity="0.42"/><rect x="49.0" y="305.0" width="10.0" height="1" fill="#ce9178" opacity="0.42"/><rect x="59.0" y="305.0" width="1.0" height="1" fill="#808080" opacity="0.42"/><rect x="12.0" y="307.0" width="1.0" height="1" fill="#808080" opacity="0.42"/><rect x="13.0" y="307.0" width="6.0" height="1" fill="#569cd6" opacity="0.42"/><rect x="20.0" y="307.0" width="4.0" height="1" fill="#9cdcfe" opacity="0.42"/><rect x="24.0" y="307.0" width="1.0" height="1" fill="#d4d4d4" opacity="0.42"/><rect x="25.0" y="307.0" width="13.0" height="1" fill="#ce9178" opacity="0.42"/><rect x="38.0" y="307.0" width="2.0" height="1" fill="#808080" opacity="0.42"/><rect x="12.0" y="309.0" width="1.0" height="1" fill="#808080" opacity="0.42"/><rect x="13.0" y="309.0" width="5.0" height="1" fill="#569cd6" opacity="0.42"/><rect x="19.0" y="309.0" width="4.0" height="1" fill="#9cdcfe" opacity="0.42"/><rect x="23.0" y="309.0" width="1.0" height="1" fill="#d4d4d4" opacity="0.42"/><rect x="24.0" y="309.0" width="13.0" height="1" fill="#ce9178" opacity="0.42"/><rect x="37.0" y="309.0" width="2.0" height="1" fill="#808080" opacity="0.42"/><rect x="12.0" y="311.0" width="1.0" height="1" fill="#808080" opacity="0.42"/><rect x="13.0" y="311.0" width="6.0" height="1" fill="#569cd6" opacity="0.42"/><rect x="20.0" y="311.0" width="3.0" height="1" fill="#9cdcfe" opacity="0.42"/><rect x="23.0" y="311.0" width="1.0" height="1" fill="#d4d4d4" opacity="0.42"/><rect x="24.0" y="311.0" width="9.0" height="1" fill="#ce9178" opacity="0.42"/><rect x="34.0" y="311.0" width="3.0" height="1" fill="#9cdcfe" opacity="0.42"/><rect x="37.0" y="311.0" width="1.0" height="1" fill="#d4d4d4" opacity="0.42"/><rect x="38.0" y="311.0" width="7.0" height="1" fill="#ce9178" opacity="0.42"/><rect x="45.0" y="311.0" width="2.0" height="1" fill="#808080" opacity="0.42"/><rect x="12.0" y="313.0" width="1.0" height="1" fill="#808080" opacity="0.42"/><rect x="13.0" y="313.0" width="4.0" height="1" fill="#569cd6" opacity="0.42"/><rect x="18.0" y="313.0" width="3.0" height="1" fill="#9cdcfe" opacity="0.42"/><rect x="21.0" y="313.0" width="1.0" height="1" fill="#d4d4d4" opacity="0.42"/><rect x="22.0" y="313.0" width="7.0" height="1" fill="#ce9178" opacity="0.42"/><rect x="29.0" y="313.0" width="2.0" height="1" fill="#808080" opacity="0.42"/><rect x="12.0" y="315.0" width="1.0" height="1" fill="#808080" opacity="0.42"/><rect x="13.0" y="315.0" width="5.0" height="1" fill="#569cd6" opacity="0.42"/><rect x="19.0" y="315.0" width="5.0" height="1" fill="#9cdcfe" opacity="0.42"/><rect x="24.0" y="315.0" width="1.0" height="1" fill="#d4d4d4" opacity="0.42"/><rect x="25.0" y="315.0" width="7.0" height="1" fill="#ce9178" opacity="0.42"/><rect x="33.0" y="315.0" width="5.0" height="1" fill="#9cdcfe" opacity="0.42"/><rect x="38.0" y="315.0" width="1.0" height="1" fill="#d4d4d4" opacity="0.42"/><rect x="39.0" y="315.0" width="6.0" height="1" fill="#ce9178" opacity="0.42"/><rect x="46.0" y="315.0" width="8.0" height="1" fill="#9cdcfe" opacity="0.42"/><rect x="54.0" y="315.0" width="1.0" height="1" fill="#d4d4d4" opacity="0.42"/><rect x="55.0" y="315.0" width="5.0" height="1" fill="#ce9178" opacity="0.42"/><rect x="61.0" y="315.0" width="6.0" height="1" fill="#9cdcfe" opacity="0.42"/><rect x="67.0" y="315.0" width="1.0" height="1" fill="#d4d4d4" opacity="0.42"/><rect x="68.0" y="315.0" width="5.0" height="1" fill="#ce9178" opacity="0.42"/><rect x="73.0" y="315.0" width="2.0" height="1" fill="#808080" opacity="0.42"/><rect x="10.0" y="317.0" width="2.0" height="1" fill="#808080" opacity="0.42"/><rect x="12.0" y="317.0" width="5.0" height="1" fill="#569cd6" opacity="0.42"/><rect x="17.0" y="317.0" width="1.0" height="1" fill="#808080" opacity="0.42"/><rect x="8.0" y="321.0" width="2.0" height="1" fill="#808080" opacity="0.42"/><rect x="10.0" y="321.0" width="5.0" height="1" fill="#569cd6" opacity="0.42"/><rect x="15.0" y="321.0" width="1.0" height="1" fill="#808080" opacity="0.42"/></svg>
<div style="position:absolute;left:884px;top:105px;width:16px;height:878px;background:#1e1e1e;border-left:1px solid #323232;border-top:1px solid #323232;box-sizing:border-box"></div>
<div style="position:absolute;left:885px;top:443px;width:15px;height:3px;background:#9a9a9a"></div>
<div style="left:0px;top:0px;width:900px;height:34px;background:#323232;"></div>
<svg style="position:absolute;left:0;top:0" width="900" height="35" viewBox="0 0 900 35" fill="none" stroke="#6e6e6e" stroke-width="1.3" stroke-linecap="round" stroke-linejoin="round"><path d="M0 6.5H16M0 11.5H16M0 16.5H16" stroke="#5e5e5e"/><path d="M118.5 12.5H133M125 6L118.5 12.5L125 19" stroke="#555"/><path d="M150.5 12.5H165M158.5 6L165 12.5L158.5 19" stroke="#555"/><rect x="184.5" y="-8" width="327" height="34.5" rx="7" fill="#373737" stroke="#484848" stroke-width="1"/><circle cx="282.5" cy="9.5" r="5.8" stroke="#666"/><path d="M286.8 14L291.5 19" stroke="#666"/><rect x="524.5" y="-8" width="61" height="34.5" rx="7" fill="#373737" stroke="#484848" stroke-width="1"/><path d="M535 4.5h12.5M553.5 9.5v5.5q0 2.5-2.500 2.500h-9.500l-4.500 3.800v-3.800h-1q-2.500 0-2.500-2.500v-8q0-2.500 2.500-2.500" stroke="#6a6a6a"/><path d="M552.5 1.500l1.100 2.600 2.600 1.100-2.600 1.100-1.100 2.600-1.100-2.600-2.600-1.100 2.600-1.100z" fill="#6a6a6a" stroke="none"/><path d="M567 9L572 14L577 9" stroke="#666"/><g stroke="#585858"><rect x="604.5" y="3.500" width="6.500" height="17" rx="1.5"/><rect x="614.5" y="3.500" width="6.500" height="6.500" rx="1.5"/><rect x="614.5" y="14" width="6.500" height="6.500" rx="1.5"/><rect x="636.5" y="3.500" width="17" height="17" rx="3"/><path d="M643.5 3.500V20.500"/><rect x="668.5" y="3.500" width="17" height="17" rx="3"/><path d="M668.5 14.500H685.500"/><rect x="700.5" y="3.500" width="17" height="17" rx="3"/><path d="M710.500 3.500V20.500"/></g><g stroke="#b4b4b4" stroke-width="1.1" stroke-linecap="butt"><path d="M751 10.500H764"/><rect x="807.500" y="5.500" width="12.500" height="12.500" rx="1"/><path d="M865 4.500L878 17.500M878 4.500L865 17.500"/></g></svg>
<span class="t" style="left:299.00px;top:1.30px;font:normal 15.6px/22px 'Liberation Sans', sans-serif;color:#727272;letter-spacing:-0.476px;">my_robot_example</span>
<div style="left:0px;top:34px;width:900px;height:44px;background:#252526;"></div>
<div style="left:1px;top:34px;width:150px;height:44px;background:#2d2d2d;"></div>
<div style="left:151px;top:34px;width:176px;height:44px;background:#1e1e1e;"></div>
<svg style="position:absolute;left:14px;top:46px" width="21" height="21" viewBox="0 0 100 100"><path d="M74 98L74 70L12 26L2 34Z" fill="#1a8ad8"/><path d="M74 2L74 30L12 74L2 66Z" fill="#2196e8"/><path d="M72 1L97 12V88L72 99Z" fill="#2aaaf5"/></svg>
<span class="t" style="left:41.00px;top:45.00px;font:normal 16.25px/23px 'Liberation Sans', sans-serif;color:#999999;letter-spacing:-0.204px;">Welcome</span>
<svg style="position:absolute;left:170.5px;top:48.5px" width="11" height="11" viewBox="0 0 11 11" fill="none" stroke="#e37933" stroke-width="2.100"><circle cx="1.800" cy="9.200" r="1.600" fill="#e37933" stroke="none"/><path d="M0.3 4.700A6 6 0 0 1 6.300 10.700"/><path d="M0.3 0.900A9.800 9.800 0 0 1 10.100 10.700"/></svg>
<span class="t" style="left:191.00px;top:45.00px;font:normal 16.25px/23px 'Liberation Sans', sans-serif;color:#ffffff;letter-spacing:0.057px;">my_robot.urdf</span>
<svg style="position:absolute;left:303px;top:49px" width="15" height="15" viewBox="0 0 15 15" stroke="#ffffff" stroke-width="1.500"><path d="M1.500 1.800L13 13.300M13 1.800L1.500 13.300"/></svg>
<span class="t" style="left:660.00px;top:45.80px;font:normal 15px/21px 'Liberation Sans', sans-serif;color:#d2d2d2;letter-spacing:-0.995px;">ESP-IDF: Search Error Hint</span>
<svg style="position:absolute;left:830px;top:46px" width="20" height="20" viewBox="0 0 20 20" fill="none" stroke="#d0d0d0" stroke-width="1.300"><rect x="1.600" y="1.600" width="16.800" height="16.800" rx="3"/><path d="M10 1.600V18.400"/></svg>
<svg style="position:absolute;left:865px;top:54px" width="16" height="5" viewBox="0 0 16 5" fill="#d0d0d0"><circle cx="2" cy="2.500" r="1.300"/><circle cx="7.600" cy="2.500" r="1.300"/><circle cx="13.200" cy="2.500" r="1.300"/></svg>
<span class="t" style="left:21.00px;top:80.50px;font:normal 16.25px/23px 'Liberation Sans', sans-serif;color:#a9a9a9;letter-spacing:0.250px;">urdf</span>
<svg style="position:absolute;left:55px;top:84px" width="12" height="15" viewBox="0 0 12 15" fill="none" stroke="#a9a9a9" stroke-width="1.300"><path d="M2 1.500L9 7.500L2 13.500"/></svg>
<svg style="position:absolute;left:77px;top:85px" width="11" height="11" viewBox="0 0 11 11" fill="none" stroke="#e37933" stroke-width="2.100"><circle cx="1.800" cy="9.200" r="1.600" fill="#e37933" stroke="none"/><path d="M0.3 4.700A6 6 0 0 1 6.300 10.700"/><path d="M0.3 0.900A9.800 9.800 0 0 1 10.100 10.700"/></svg>
<span class="t" style="left:98.00px;top:80.50px;font:normal 16.25px/23px 'Liberation Sans', sans-serif;color:#a9a9a9;letter-spacing:0.057px;">my_robot.urdf</span>
<div style="left:0px;top:983px;width:900px;height:25px;background:#007acc;"></div>
<svg style="position:absolute;left:0;top:983px" width="900" height="25" viewBox="0 0 900 25" fill="none" stroke="#fff" stroke-width="1.300" stroke-linecap="round" stroke-linejoin="round"><circle cx="1" cy="13" r="8"/><path d="M-2 10L4 16M4 10L-2 16"/><path d="M37 5L45 19.500H29Z"/><path d="M37 10.500V14.800M37 17V17.300"/><path d="M669 5.500q-3 0-3 2.500v2.500q0 2.500-2 2.500 2 0 2 2.500v2.500q0 2.500 3 2.500M675 5.500q3 0 3 2.500v2.500q0 2.500 2 2.500-2 0-2 2.500v2.500q0 2.500-3 2.500" stroke-width="1.400"/><rect x="741.400" y="4.800" width="6.200" height="8" rx="2.600" stroke-width="1.900"/><rect x="749" y="4.800" width="6.200" height="8" rx="2.600" stroke-width="1.900"/><path d="M738.700 14.300q0-2.600 2.600-2.600h14q2.600 0 2.600 2.600v2.900q-4.600 4.100-9.600 4.100t-9.600-4.100z" fill="#fff" stroke="#fff" stroke-width="0.800"/><rect x="744.500" y="14" width="1.700" height="3.800" rx="0.600" fill="#007acc" stroke="none"/><rect x="750.400" y="14" width="1.700" height="3.800" rx="0.600" fill="#007acc" stroke="none"/><circle cx="788" cy="13" r="1.600" fill="#fff" stroke="none"/><path d="M784.500 9.500a5 5 0 0 0 0 7M791.500 9.500a5 5 0 0 1 0 7M782 7a8.500 8.500 0 0 0 0 12M794 7a8.500 8.500 0 0 1 0 12"/><path d="M875 17.500h13.500M876.500 17.500v-5.500a5.300 5.300 0 0 1 10.600 0v5.500M880 20a2 2 0 0 0 3.600 0"/><circle cx="887.500" cy="7.500" r="3.300" fill="#fff" stroke="none"/></svg>
<span class="t" style="left:14.00px;top:985.50px;font:normal 15px/21px 'Liberation Sans', sans-serif;color:#ffffff;letter-spacing:0.658px;">0</span>
<span class="t" style="left:51.00px;top:985.50px;font:normal 15px/21px 'Liberation Sans', sans-serif;color:#ffffff;letter-spacing:0.658px;">0</span>
<span class="t" style="left:381.00px;top:985.50px;font:normal 15px/21px 'Liberation Sans', sans-serif;color:#ffffff;letter-spacing:-0.325px;">Ln 78, Col 28</span>
<span class="t" style="left:486.00px;top:985.50px;font:normal 15px/21px 'Liberation Sans', sans-serif;color:#ffffff;letter-spacing:-0.634px;">Spaces: 4</span>
<span class="t" style="left:567.00px;top:985.50px;font:normal 15px/21px 'Liberation Sans', sans-serif;color:#ffffff;letter-spacing:-0.499px;">UTF-8</span>
<span class="t" style="left:627.00px;top:985.50px;font:normal 15px/21px 'Liberation Sans', sans-serif;color:#ffffff;letter-spacing:-1.502px;">LF</span>
<span class="t" style="left:689.00px;top:985.50px;font:normal 15px/21px 'Liberation Sans', sans-serif;color:#ffffff;letter-spacing:-0.614px;">XML</span>
<span class="t" style="left:802.00px;top:985.50px;font:normal 15px/21px 'Liberation Sans', sans-serif;color:#ffffff;letter-spacing:-0.385px;">Go Live</span>
</div><div style="left:900px;top:0px;width:1px;height:500px;background:#5c5c5c;"></div>
<div style="left:901px;top:0px;width:1px;height:500px;background:#8e8e8e;"></div>
<div id="term" style="position:absolute;left:902px;top:0;width:948px;height:500px;overflow:hidden;background:#300a24;">
<div style="left:0px;top:0px;width:948px;height:41px;background:#333333;"></div>
<svg style="position:absolute;left:0;top:0" width="948" height="41" viewBox="902 0 948 41"><path d="M905 41 Q913 41 913 33 V9 Q913 1 921 1 H1205 Q1213 1 1213 9 V33 Q1213 41 1221 41 Z" fill="#300a24"/><rect x="924" y="11" width="20" height="20" rx="2.500" fill="#e95420"/><circle cx="934" cy="21" r="4.700" fill="none" stroke="#fff" stroke-width="2.300"/><g fill="#fff" stroke="#e95420" stroke-width="1.200"><circle cx="927.700" cy="21" r="2.100"/><circle cx="937.200" cy="15.500" r="2.100"/><circle cx="937.200" cy="26.500" r="2.100"/></g><g fill="none" stroke="#e4e4e4" stroke-width="1.150"><path d="M1180.500 15.500L1191.500 26.500M1191.500 15.500L1180.500 26.500"/><path d="M1232 21H1244M1238 15V27"/><path d="M1271 18.500L1276 23.500L1281 18.500"/></g><path d="M1259.500 6V36" stroke="#4a4a4a" stroke-width="1"/><g fill="none" stroke="#9a9a9a" stroke-width="1.100"><path d="M1709.500 15H1722"/><rect x="1768.500" y="9.500" width="11" height="11" rx="0.500"/><path d="M1826 9L1838 21M1838 9L1826 21"/></g></svg>
<span class="t" style="left:55.00px;top:10.70px;font:bold 15px/21px 'Liberation Sans', sans-serif;color:#ffffff;letter-spacing:0.083px;">Ubuntu-24.04</span>
<div class="tl" style="top:53.3px">[INFO] [launch]: Default logging verbosity is set to INFO</div>
<div class="tl" style="top:77.3px">[INFO] [robot_state_publisher-1]: process started with pid [10509]</div>
<div class="tl" style="top:101.3px">[INFO] [joint_state_publisher_gui-2]: process started with pid [10510]</div>
<div class="tl" style="top:125.3px">[INFO] [rviz2-3]: process started with pid [10511]</div>
<div class="tl" style="top:149.3px">[robot_state_publisher-1] [INFO] [1772772563.381561480] [robot_state_publish</div>
<div class="tl" style="top:173.3px">er]: Robot initialized</div>
<div class="tl" style="top:197.3px">[rviz2-3] [INFO] [1772772563.577375173] [rviz2]: Stereo is NOT SUPPORTED</div>
<div class="tl" style="top:221.3px">[rviz2-3] [INFO] [1772772563.577541531] [rviz2]: OpenGl version: 4.5 (GLSL 4</div>
<div class="tl" style="top:245.3px">.5)</div>
<div class="tl" style="top:269.3px">[rviz2-3] [INFO] [1772772563.629892124] [rviz2]: Stereo is NOT SUPPORTED</div>
<div class="tl" style="top:293.3px">[joint_state_publisher_gui-2] [INFO] [1772772563.827990475] [joint_state_pub</div>
<div class="tl" style="top:317.3px">lisher]: Waiting for robot_description to be published on the robot_descript</div>
<div class="tl" style="top:341.3px">ion topic...</div>
<div class="tl" style="top:365.3px">[joint_state_publisher_gui-2] [INFO] [1772772563.837638504] [joint_state_pub</div>
<div class="tl" style="top:389.3px">lisher]: Centering</div>
<div class="tl" style="top:413.3px">[joint_state_publisher_gui-2] [INFO] [1772772563.944753100] [joint_state_pub</div>
<div class="tl" style="top:437.3px">lisher]: Centering</div>
</div><div style="left:901px;top:500px;width:685px;height:508px;background:#bebebe;"></div>
<svg style="position:absolute;left:906px;top:506px" width="18" height="16" viewBox="0 0 18 16"><rect x="1.500" y="1.500" width="15" height="13" fill="#fff" stroke="#000" stroke-width="1.200"/><rect x="1" y="1" width="16" height="3.600" fill="#000"/></svg>
<span class="t" style="left:1175.00px;top:503.20px;font:bold 14.6px/20px 'Liberation Sans', sans-serif;color:#767676;letter-spacing:0.719px;">/opt/ros/jazzy/share/urdf_tutorial/rviz/urdf.rviz* - RViz</span>
<div style="left:907px;top:526.5px;width:679px;height:21px;background:#efefef;"></div>
<span class="t" style="left:917.00px;top:526.70px;font:normal 13.6px/19px 'Liberation Sans', sans-serif;color:#1a1a1a;letter-spacing:-0.226px;"><u>F</u>ile</span>
<span class="t" style="left:951.50px;top:526.70px;font:normal 13.6px/19px 'Liberation Sans', sans-serif;color:#1a1a1a;letter-spacing:-0.344px;"><u>P</u>anels</span>
<span class="t" style="left:1005.00px;top:526.70px;font:normal 13.6px/19px 'Liberation Sans', sans-serif;color:#1a1a1a;letter-spacing:-0.114px;"><u>H</u>elp</span>
<div style="left:907px;top:547px;width:679px;height:37.5px;background:linear-gradient(#fbfbfb,#ededed);border-top:1px solid #d5d5d5;border-bottom:1px solid #c4c4c4;box-sizing:border-box;"></div>
<svg style="position:absolute;left:911px;top:557px" width="6" height="19" viewBox="0 0 6 19" fill="#b8b8b8"><rect x="0.5" y="0.5" width="1" height="1"/><rect x="3.5" y="2.5" width="1" height="1"/><rect x="0.5" y="4.5" width="1" height="1"/><rect x="3.5" y="6.5" width="1" height="1"/><rect x="0.5" y="8.5" width="1" height="1"/><rect x="3.5" y="10.5" width="1" height="1"/><rect x="0.5" y="12.5" width="1" height="1"/><rect x="3.5" y="14.5" width="1" height="1"/><rect x="0.5" y="16.5" width="1" height="1"/></svg>
<div style="left:920px;top:551px;width:119px;height:30.5px;background:#dcdcdc;border:1px solid #b2b2b2;border-radius:3px;box-sizing:border-box;"></div>
<svg style="position:absolute;left:923px;top:558px" width="16" height="16" viewBox="0 0 16 16" stroke-linejoin="round"><ellipse cx="8" cy="6.300" rx="6.300" ry="2.400" fill="none" stroke="#333" stroke-width="2.200"/><ellipse cx="8" cy="6.300" rx="6.300" ry="2.400" fill="none" stroke="#fff" stroke-width="0.900"/><path d="M8 0.600L11 4.200H9.100V11.800H11L8 15.400L5 11.800H6.900V4.200H5Z" fill="#fff" stroke="#333" stroke-width="0.900"/><path d="M0.500 4.300l3.200 0.300-1.800 2.900zM15.500 4.300l-3.200 0.300 1.800 2.900z" fill="#fff" stroke="#333" stroke-width="0.800"/></svg>
<span class="t" style="left:941.40px;top:557.60px;font:normal 12.5px/18px 'Liberation Sans', sans-serif;color:#1a1a1a;letter-spacing:-0.318px;">Move Camera</span>
<svg style="position:absolute;left:1043px;top:558px" width="16" height="16" viewBox="0 0 16 16"><path d="M6.500 2h3v4.500h4.500v3h-4.500v4.500h-3v-4.500h-4.500v-3h4.500z" fill="#8fb5e3" stroke="#3465a4" stroke-width="1"/></svg>
<svg style="position:absolute;left:1091px;top:558px" width="24" height="24" viewBox="0 0 24 24"><rect x="2" y="6" width="12" height="3" rx="1" fill="#8fb5e3" stroke="#3465a4" stroke-width="1"/><path d="M16 17h6l-3 3z" fill="#444"/></svg>
<div style="left:907px;top:584px;width:679px;height:393px;background:#efefef;"></div>
<svg style="position:absolute;left:911px;top:776px" width="8" height="10" viewBox="0 0 8 10"><path d="M6.500 1.500v7l-4.500-3.500z" fill="#444"/></svg>
<svg style="position:absolute;left:923px;top:586px" width="661" height="391" viewBox="923 586 661 391"><defs>
<linearGradient id="gArm" gradientUnits="userSpaceOnUse" x1="1280" y1="647" x2="1285.200" y2="697">
<stop offset="0" stop-color="#098a0b"/><stop offset=".18" stop-color="#0bb811"/><stop offset=".45" stop-color="#0cd015"/><stop offset=".62" stop-color="#0bc012"/><stop offset=".85" stop-color="#078a0b"/><stop offset="1" stop-color="#034f05"/></linearGradient>
<linearGradient id="gArm2" gradientUnits="userSpaceOnUse" x1="1145" y1="667" x2="1149.700" y2="711">
<stop offset="0" stop-color="#098a0b"/><stop offset=".18" stop-color="#0bb811"/><stop offset=".45" stop-color="#0cce15"/><stop offset=".62" stop-color="#0bbc12"/><stop offset=".85" stop-color="#078a0b"/><stop offset="1" stop-color="#034f05"/></linearGradient>
<linearGradient id="gCyl" x1="0" x2="1" y1="0" y2="0">
<stop offset="0" stop-color="#7c0707"/><stop offset=".14" stop-color="#a70b0b"/><stop offset=".42" stop-color="#d41111"/><stop offset=".6" stop-color="#cf1010"/><stop offset=".84" stop-color="#930a0a"/><stop offset="1" stop-color="#5c0505"/></linearGradient>
<linearGradient id="gDisc" x1="0" x2="1" y1="0" y2="0">
<stop offset="0" stop-color="#1a8f1c"/><stop offset=".18" stop-color="#14b01a"/><stop offset=".5" stop-color="#0cc415"/><stop offset=".8" stop-color="#0a9c10"/><stop offset="1" stop-color="#08760c"/></linearGradient>
<linearGradient id="gWr" gradientUnits="userSpaceOnUse" x1="1060" y1="714" x2="1109" y2="738">
<stop offset="0" stop-color="#c40808"/><stop offset=".25" stop-color="#f20a0a"/><stop offset=".55" stop-color="#c80808"/><stop offset=".8" stop-color="#7a0505"/><stop offset="1" stop-color="#3c0202"/></linearGradient>
<radialGradient id="gSph" gradientUnits="userSpaceOnUse" cx="1071" cy="731" r="38">
<stop offset="0" stop-color="#f40b0b"/><stop offset=".35" stop-color="#e00a0a"/><stop offset=".7" stop-color="#b00808"/><stop offset="1" stop-color="#6a0404"/></radialGradient>
<linearGradient id="gArmIn" gradientUnits="userSpaceOnUse" x1="1352" y1="641" x2="1357" y2="689">
<stop offset="0" stop-color="#0aae0e"/><stop offset=".15" stop-color="#08cc10"/><stop offset=".5" stop-color="#04e40e"/><stop offset=".8" stop-color="#07cc10"/><stop offset="1" stop-color="#0a9e0e"/></linearGradient>
<clipPath id="cDisk"><ellipse cx="1382" cy="663" rx="45.800" ry="50"/></clipPath>
<clipPath id="cArmL"><path d="M1097.100 671.700 L1186 663.500 L1194.800 704.800 L1108.300 714.600 Z"/></clipPath>
</defs><rect x="923" y="586" width="662" height="392" fill="#303030"/><g stroke="#a0a0a4" stroke-opacity=".62" stroke-width="1" fill="none"><path d="M1138.4 691.2L-13154.3 3741.4"/><path d="M1193.5 692.8L-10480.5 3741.3"/><path d="M1251.1 694.5L-7806.7 3741.1"/><path d="M1311.3 696.2L-5132.9 3741.0"/><path d="M1374.5 698.0L-2459.1 3740.9"/><path d="M1440.7 700.0L214.7 3740.7"/><path d="M1510.3 702.0L2888.5 3740.6"/><path d="M1583.5 704.1L5562.3 3740.4"/><path d="M1660.5 706.3L8236.1 3740.3"/><path d="M1741.7 708.6L10909.9 3740.2"/><path d="M1827.4 711.1L13583.7 3740.0"/><path d="M1138.4 691.2L1827.4 711.1"/><path d="M1093.3 700.9L1890.8 727.4"/><path d="M1034.2 713.5L1981.9 750.9"/><path d="M953.3 730.7L2123.7 787.4"/><path d="M835.9 755.8L2375.1 852.2"/><path d="M649.8 795.5L2943.2 998.6"/><path d="M310.3 867.9L5444.5 1643.0"/><path d="M-505.7 1042.1L4778.3 3740.5"/><path d="M-5163.8 2036.2L-9776.7 3741.2"/></g><g opacity=".94"><path d="M1311.400 798.900L1479.800 810.200L1482.600 911.400L1232.300 886.100Z" fill="#09094c"/><path d="M1232.300 886.100L1482.600 911.400L1479.800 956.300L1237.300 927.100Z" fill="#0909cc"/></g><path d="M1313.900 837 V853 A62.200 28.700 0 0 0 1438.300 853 V837 Z" fill="url(#gDisc)"/><ellipse cx="1376.100" cy="837" rx="62.200" ry="28.700" fill="#00470a"/><g opacity=".9"><path d="M1330.500 680 L1336 848 A40.300 18.200 0 0 0 1416.300 848 L1421.400 680 Z" fill="url(#gCyl)"/></g><path d="M1376.300 705 L1376.500 778" stroke="#ff5a08" stroke-width="1.600"/><path d="M1376.300 777 V832" stroke="#d80a3c" stroke-width="3"/><path d="M1372 804 h8.600 l-3.200 12 h-2.200z" fill="#f00a28"/><path d="M1336 829.400 L1375.500 823.700" stroke="#fa0a0a" stroke-width="3"/><path d="M1376.100 824.300 L1390.600 840.300" stroke="#b40808" stroke-width="2"/><path d="M1338.800 846.900 L1376.500 840.300 L1389.700 860.100" stroke="#e01a10" stroke-width="1.200" fill="none" opacity=".45"/><circle cx="1390.600" cy="840.300" r="2.300" fill="#10f010"/><circle cx="1390.200" cy="860.700" r="2" fill="#0cae0c"/><ellipse cx="1104.900" cy="692" rx="32.100" ry="28.500" fill="#8e0707"/><ellipse cx="1100.700" cy="694.800" rx="32.100" ry="28.500" fill="#d40a0a"/><path d="M1071.500 706 L1054.600 733 L1102.500 748 L1113 722 Z" fill="url(#gWr)"/><ellipse cx="1078.900" cy="739.200" rx="25.400" ry="23.600" fill="url(#gSph)"/><ellipse cx="1078.900" cy="739.200" rx="25" ry="23.200" fill="none" stroke="#ff3030" stroke-opacity=".18" stroke-width="1"/><path d="M1075.200 745.500 L1055.900 786.800" stroke="#f40606" stroke-width="4.600"/><path d="M1099.500 749.500 L1134.400 764.600" stroke="#0a0aee" stroke-width="4.200"/><path d="M1128 705.800 L1158.300 719.400" stroke="#0a0aee" stroke-width="4.200"/><path d="M1194.300 700 L1201.100 733.700" stroke="#0a0aee" stroke-width="4.200"/><ellipse cx="1370.600" cy="664.300" rx="45.800" ry="50" fill="#087d0a"/><path d="M1097.100 671.700 L1186.500 663.400 L1195.200 704.800 L1108.300 714.600 Q1094 696 1097.100 671.700Z" fill="url(#gArm2)"/><g clip-path="url(#cArmL)"><ellipse cx="1100.700" cy="694.800" rx="32.100" ry="28.500" fill="#ffbe00" opacity=".15"/></g><path d="M1185.500 657.400 L1374 639.300 Q1386 660 1382.200 685.300 L1196 706.300 Q1183 684 1185.500 657.400Z" fill="url(#gArm)"/><path d="M1185.500 657.400 Q1183.500 684 1196 706.300" stroke="#033c04" stroke-width="1.600" fill="none"/><path d="M1197 683.500 L1330 668.500" stroke="#3ee43e" stroke-width="1.300" opacity=".6"/><path d="M1110 693 L1186 684.500" stroke="#5ad83c" stroke-width="2" opacity=".3"/><ellipse cx="1382" cy="663" rx="45.800" ry="50" fill="#0cbd10"/><g clip-path="url(#cDisk)"><path d="M1320 644.700 L1374.500 639.300 Q1385.500 660 1382.200 685.300 L1320 692.300Z" fill="url(#gArmIn)"/></g><path d="M1376 686 V712" stroke="#48de28" stroke-width="1.400"/><path d="M1371.600 614.500 L1375.400 639.500" stroke="#0aa860" stroke-width="2.400"/><path d="M1382 662.500 L1391.500 665 L1391 670 L1381.500 667Z" fill="#055f06"/><ellipse cx="1391.800" cy="667.600" rx="2.200" ry="2.900" fill="#10e010"/></svg>
<div style="left:907px;top:977px;width:679px;height:27px;background:#efefef;"></div>
<div style="left:909.3px;top:980.3px;width:49.5px;height:21.5px;background:linear-gradient(#fefefe,#ececec);border:1px solid #b6b6b6;border-radius:3px;box-sizing:border-box;"></div>
<span class="t" style="left:917.05px;top:981.50px;font:normal 13.4px/19px 'Liberation Sans', sans-serif;color:#1a1a1a;letter-spacing:-0.296px;">Reset</span>
<span class="t" style="left:965.00px;top:981.80px;font:normal 13.2px/18px 'Liberation Sans', sans-serif;color:#1a1a1a;letter-spacing:0.266px;"><b>Left-Click:</b> Rotate. <b>Middle-Click:</b> Move X/Y. <b>Right-Click/Mouse Wheel:</b> Zoom. <b>Shift:</b> More options.</span><div id="jsp" style="position:absolute;left:1584px;top:500px;width:266px;height:508px;overflow:hidden;background:#efefef;">
<div style="left:0px;top:0px;width:266px;height:27px;background:linear-gradient(#ffffff 30%,#f0f0f0);"></div>
<div style="left:0px;top:27px;width:6px;height:481px;background:#d8d8d8;"></div>
<div style="left:264px;top:27px;width:2px;height:481px;background:#d8d8d8;"></div>
<svg style="position:absolute;left:5px;top:6px" width="18" height="16" viewBox="0 0 18 16"><rect x="1.500" y="1.500" width="15" height="13" fill="#fff" stroke="#000" stroke-width="1.300"/><rect x="1" y="1" width="16" height="3.600" fill="#000"/></svg>
<span class="t" style="left:26.20px;top:3.30px;font:bold 14.6px/20px 'Liberation Sans', sans-serif;color:#000000;letter-spacing:0.400px;">Joint State Publis...</span>
<div style="left:177.29999999999995px;top:5.199999999999989px;width:26.4px;height:17.4px;background:#e1e1e1;border:1px solid #a9a9a9;border-radius:2px;box-sizing:border-box;"></div>
<div style="left:207.4000000000001px;top:5.199999999999989px;width:26.4px;height:17.4px;background:#e1e1e1;border:1px solid #a9a9a9;border-radius:2px;box-sizing:border-box;"></div>
<div style="left:237.4000000000001px;top:5.199999999999989px;width:26.4px;height:17.4px;background:#e1e1e1;border:1px solid #a9a9a9;border-radius:2px;box-sizing:border-box;"></div>
<svg style="position:absolute;left:0;top:0" width="266" height="27" viewBox="1584 500 266 27" fill="none" stroke="#000"><path d="M1770 517.500H1779" stroke-width="2"/><rect x="1799" y="509.700" width="11.500" height="8.300" stroke-width="1.200"/><path d="M1798.400 509.800H1811.100" stroke-width="2.200"/><path d="M1830.500 510L1838.500 518.500M1838.500 510L1830.500 518.500" stroke-width="2.100"/></svg>
<div style="left:15.200000000000045px;top:37px;width:239.5px;height:22px;background:linear-gradient(#fefefe,#ececec);border:1px solid #b6b6b6;border-radius:3.5px;box-sizing:border-box;"></div>
<span class="t" style="left:102.00px;top:38.20px;font:normal 13.4px/19px 'Liberation Sans', sans-serif;color:#1a1a1a;letter-spacing:-0.192px;">Randomize</span>
<div style="left:15.200000000000045px;top:65px;width:239.5px;height:22.6px;background:linear-gradient(#fefefe,#ececec);border:1px solid #b6b6b6;border-radius:3.5px;box-sizing:border-box;"></div>
<span class="t" style="left:115.00px;top:66.90px;font:normal 13.4px/19px 'Liberation Sans', sans-serif;color:#1a1a1a;letter-spacing:-0.032px;">Center</span>
<div style="left:15.200000000000045px;top:94px;width:239.8px;height:430px;border:1px solid #c2c2c2;box-sizing:border-box;"></div>
<div style="position:absolute;left:16.200000000000045px;top:95px;width:237.800px;height:420px;overflow:hidden">
<span class="t" style="left:18.20px;top:20.50px;font:bold 12px/17px 'Liberation Sans', sans-serif;color:#000000;letter-spacing:-0.022px;">base_rotation_shoulder_joint</span>
<div style="left:192.20000000000005px;top:18.200000000000045px;width:44px;height:21.5px;background:#ffffff;border:1px solid #b4b4b4;border-radius:3px;box-sizing:border-box;"></div>
<span class="t" style="left:197.77px;top:20.50px;font:bold 12px/17px 'Liberation Sans', sans-serif;color:#000000;">-2.618</span>
<div style="left:19.0px;top:51.5px;width:197.8px;height:4.2px;background:#d6d6d6;border:1px solid #b9b9b9;border-radius:2px;box-sizing:border-box;"></div>
<div style="left:19.0px;top:47.299999999999955px;width:12.4px;height:12.4px;background:linear-gradient(#ffffff,#ececec);border:1px solid #a6a6a6;border-radius:3px;box-sizing:border-box;"></div>
<span class="t" style="left:18.20px;top:87.50px;font:bold 12px/17px 'Liberation Sans', sans-serif;color:#000000;letter-spacing:-0.011px;">rotation_shoulder_shoulder_joint</span>
<div style="left:216.39999999999986px;top:85.20000000000005px;width:44px;height:21.5px;background:#ffffff;border:1px solid #b4b4b4;border-radius:3px;box-sizing:border-box;"></div>
<span class="t" style="left:233.20px;top:87.50px;font:bold 12px/17px 'Liberation Sans', sans-serif;color:#000000;">0.000</span>
<div style="left:19.0px;top:118.5px;width:197.8px;height:4.2px;background:#d6d6d6;border:1px solid #b9b9b9;border-radius:2px;box-sizing:border-box;"></div>
<div style="left:19.0px;top:118.5px;width:99.20000000000005px;height:4.2px;background:#3b8fd9;border:1px solid #2f78bd;border-radius:2px;box-sizing:border-box;"></div>
<div style="left:112.0px;top:114.29999999999995px;width:12.4px;height:12.4px;background:linear-gradient(#ffffff,#ececec);border:1px solid #a6a6a6;border-radius:3px;box-sizing:border-box;"></div>
<span class="t" style="left:18.20px;top:154.50px;font:bold 12px/17px 'Liberation Sans', sans-serif;color:#000000;letter-spacing:0.003px;">shoulder_elbow_joint</span>
<div style="left:173.20000000000005px;top:152.20000000000005px;width:44px;height:21.5px;background:#ffffff;border:1px solid #b4b4b4;border-radius:3px;box-sizing:border-box;"></div>
<span class="t" style="left:182.77px;top:154.50px;font:bold 12px/17px 'Liberation Sans', sans-serif;color:#000000;">0.076</span>
<div style="left:19.0px;top:185.5px;width:197.8px;height:4.2px;background:#d6d6d6;border:1px solid #b9b9b9;border-radius:2px;box-sizing:border-box;"></div>
<div style="left:19.0px;top:185.5px;width:103.09999999999991px;height:4.2px;background:#3b8fd9;border:1px solid #2f78bd;border-radius:2px;box-sizing:border-box;"></div>
<div style="left:115.89999999999986px;top:181.29999999999995px;width:12.4px;height:12.4px;background:linear-gradient(#ffffff,#ececec);border:1px solid #a6a6a6;border-radius:3px;box-sizing:border-box;"></div>
<span class="t" style="left:18.20px;top:221.50px;font:bold 12px/17px 'Liberation Sans', sans-serif;color:#000000;letter-spacing:0.008px;">elbow_wrist1_joint</span>
<div style="left:173.20000000000005px;top:219.20000000000005px;width:44px;height:21.5px;background:#ffffff;border:1px solid #b4b4b4;border-radius:3px;box-sizing:border-box;"></div>
<span class="t" style="left:178.77px;top:221.50px;font:bold 12px/17px 'Liberation Sans', sans-serif;color:#000000;">-3.140</span>
<div style="left:19.0px;top:252.5px;width:197.8px;height:4.2px;background:#d6d6d6;border:1px solid #b9b9b9;border-radius:2px;box-sizing:border-box;"></div>
<div style="left:19.0px;top:248.29999999999995px;width:12.4px;height:12.4px;background:linear-gradient(#ffffff,#ececec);border:1px solid #a6a6a6;border-radius:3px;box-sizing:border-box;"></div>
<span class="t" style="left:18.20px;top:288.50px;font:bold 12px/17px 'Liberation Sans', sans-serif;color:#000000;letter-spacing:-0.002px;">wrist1_wrist2_joint</span>
<div style="left:173.20000000000005px;top:286.20000000000005px;width:44px;height:21.5px;background:#ffffff;border:1px solid #b4b4b4;border-radius:3px;box-sizing:border-box;"></div>
<span class="t" style="left:178.77px;top:288.50px;font:bold 12px/17px 'Liberation Sans', sans-serif;color:#000000;">-0.925</span>
<div style="left:19.0px;top:319.5px;width:197.8px;height:4.2px;background:#d6d6d6;border:1px solid #b9b9b9;border-radius:2px;box-sizing:border-box;"></div>
<div style="left:19.0px;top:319.5px;width:43.799999999999955px;height:4.2px;background:#3b8fd9;border:1px solid #2f78bd;border-radius:2px;box-sizing:border-box;"></div>
<div style="left:56.59999999999991px;top:315.29999999999995px;width:12.4px;height:12.4px;background:linear-gradient(#ffffff,#ececec);border:1px solid #a6a6a6;border-radius:3px;box-sizing:border-box;"></div>
<span class="t" style="left:18.20px;top:355.50px;font:bold 12px/17px 'Liberation Sans', sans-serif;color:#000000;letter-spacing:-0.002px;">wrist2_wrist3_joint</span>
<div style="left:173.20000000000005px;top:353.20000000000005px;width:44px;height:21.5px;background:#ffffff;border:1px solid #b4b4b4;border-radius:3px;box-sizing:border-box;"></div>
<span class="t" style="left:189.44px;top:355.50px;font:bold 12px/17px 'Liberation Sans', sans-serif;color:#000000;">0.00</span>
<div style="left:19.0px;top:386.5px;width:197.8px;height:4.2px;background:#d6d6d6;border:1px solid #b9b9b9;border-radius:2px;box-sizing:border-box;"></div>
<div style="left:19.0px;top:386.5px;width:99.20000000000005px;height:4.2px;background:#3b8fd9;border:1px solid #2f78bd;border-radius:2px;box-sizing:border-box;"></div>
<div style="left:112.0px;top:382.29999999999995px;width:12.4px;height:12.4px;background:linear-gradient(#ffffff,#ececec);border:1px solid #a6a6a6;border-radius:3px;box-sizing:border-box;"></div>
</div>
</div></body></html>
